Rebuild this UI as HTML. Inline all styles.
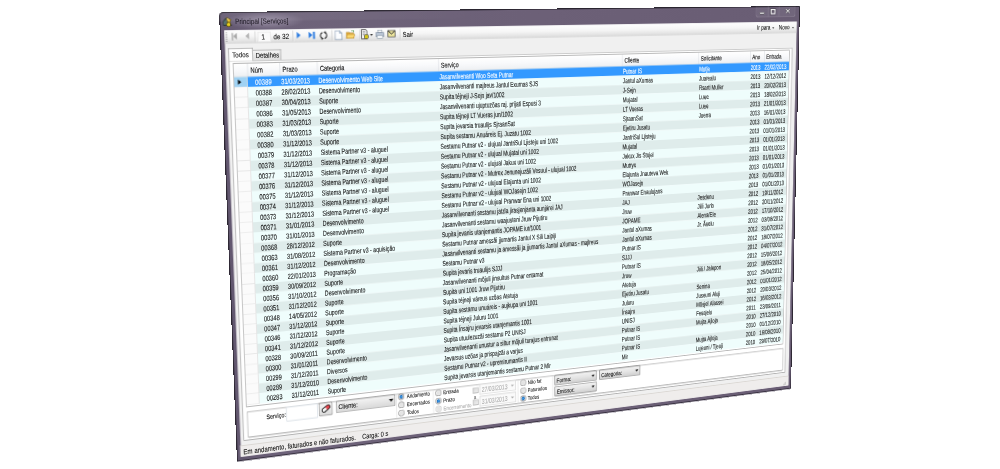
<!DOCTYPE html><html><head><meta charset="utf-8"><style>
html,body{margin:0;padding:0;background:#fff;width:1000px;height:469px;overflow:hidden}
#outer{position:absolute;left:0;top:0;width:651.0px;height:440.2px;transform-origin:0 0;transform:matrix3d(1.11974370,-0.00751206,0,0.0002840882,0.06874739,1.07584913,0,0.0001175396,0,0,1,0,219.0000,12.0000,0,1.000000)}
#win{position:absolute;left:0;top:0;width:1050px;height:710px;transform-origin:0 0;transform:scale(0.62);
background:linear-gradient(90deg,#62576f,#6e637a 8%,#6c6077 50%,#695d74);border-radius:7px 2px 0 0;box-shadow:inset 0 0 0 1.5px #2a2530}
.a{position:absolute}
.t{position:absolute;left:0;top:0;white-space:nowrap;line-height:16px;transform-origin:0 0;font-family:"Liberation Sans",sans-serif}
</style></head><body><div id="wrap" style="position:absolute;left:0;top:0;width:1000px;height:469px;filter:blur(.22px)"><div id="outer"><div id="win">

<div class="a" style="left:0px;top:0px;width:1050px;height:14px;background:linear-gradient(90deg,rgba(255,255,255,.08),rgba(255,255,255,0) 40%);border-radius:7px 0 0 0"></div>
<div class="a" style="left:8px;top:1px;width:125px;height:26px;background:radial-gradient(ellipse closest-side,rgba(235,228,245,.35),rgba(235,228,245,.15) 60%,rgba(235,228,245,0))"></div>
<svg class="a" style="left:5px;top:7px" width="16" height="16" viewBox="0 0 16 16"><path d="M1 7 L5 3 L8 6 L8 13 L1 13Z" fill="#557070" stroke="#1a2a2a" stroke-width=".9"/><path d="M6 1.5 L13 5 L10.5 9.5 L7 8Z" fill="#e8c030" stroke="#5a4a10" stroke-width=".7"/><path d="M6.5 2.5 L9 3.5 L8 6Z" fill="#fff4b0"/><circle cx="9" cy="12" r="3.2" fill="#e8d020" stroke="#4a4000" stroke-width=".8"/><path d="M12 11 L14.5 13 L12 14Z" fill="#222"/></svg>
<div class="a" style="left:957px;top:0px;width:84px;height:18.5px;border:1px solid rgba(255,255,255,.25);border-top:none;border-radius:0 0 5px 5px;box-sizing:border-box;background:rgba(255,255,255,.06)"></div>
<div class="a" style="left:982px;top:0px;width:1px;height:18px;background:rgba(255,255,255,.18)"></div>
<div class="a" style="left:1004.5px;top:0px;width:1px;height:18px;background:rgba(255,255,255,.18)"></div>
<div class="a" style="left:965px;top:9.5px;width:10px;height:4.5px;background:#f0f0f0;border:1px solid #3a3540;box-sizing:border-box"></div>
<div class="a" style="left:988px;top:4.5px;width:9.5px;height:9.5px;border:2px solid #f0f0f0;box-shadow:0 0 0 1px #3a3540,inset 0 0 0 1px #3a3540;box-sizing:border-box"></div>
<svg class="a" style="left:1019px;top:4px" width="11" height="9" viewBox="0 0 11 9"><path d="M1.5 1 L9.5 8 M9.5 1 L1.5 8" stroke="#3a3540" stroke-width="3.4"/><path d="M1.5 1 L9.5 8 M9.5 1 L1.5 8" stroke="#f0f0f0" stroke-width="1.8"/></svg>
<div class="a" style="left:7px;top:27.5px;width:1037px;height:675px;background:#f0f0f0"></div>
<div class="a" style="left:7px;top:27.5px;width:1037px;height:20.5px;background:linear-gradient(#fefefe,#f6f6f6 45%,#e4e4e4 80%,#d6d6d6)"></div>
<div class="a" style="left:9px;top:31px;width:2px;height:14px;background:repeating-linear-gradient(#999 0 1.5px,transparent 1.5px 3px)"></div>
<div class="a" style="left:18px;top:32px;width:2px;height:11px;background:#a8a8a8"></div>
<div class="a" style="left:20px;top:32px;width:0px;height:0px;border:5.5px solid transparent;border-right:6px solid #a8a8a8;border-left:none"></div>
<div class="a" style="left:39px;top:32px;width:0px;height:0px;border:5.5px solid transparent;border-right:6px solid #b4b4b4;border-left:none"></div>
<div class="a" style="left:54px;top:30px;width:1px;height:16px;background:#c4c4c4;box-shadow:1px 0 0 #fff"></div>
<div class="a" style="left:58px;top:31px;width:21px;height:14.5px;background:#fafafa;border:1px solid #e4e4e4;box-sizing:border-box"></div>
<div class="a" style="left:113px;top:30px;width:1px;height:16px;background:#c4c4c4;box-shadow:1px 0 0 #fff"></div>
<div class="a" style="left:120px;top:32px;width:0px;height:0px;border:5.5px solid transparent;border-left:6px solid #2a7ae0;border-right:none"></div>
<div class="a" style="left:139px;top:32px;width:0px;height:0px;border:5.5px solid transparent;border-left:6px solid #2a7ae0;border-right:none"></div>
<div class="a" style="left:146px;top:32px;width:2.5px;height:11px;background:#2a7ae0"></div>
<svg class="a" style="left:156px;top:31px" width="14" height="14" viewBox="0 0 14 14"><path d="M5.5 2.3 A5 5 0 0 0 4.5 11.5" fill="none" stroke="#2a2a2a" stroke-width="1.7"/><path d="M8.5 11.7 A5 5 0 0 0 9.5 2.5" fill="none" stroke="#2a2a2a" stroke-width="1.7"/><path d="M3 9.5 L7 12 L3.5 13.8Z M11 4.5 L7 2 L10.5 0.2Z" fill="#2a2a2a"/></svg>
<div class="a" style="left:176px;top:30px;width:1px;height:16px;background:#c4c4c4;box-shadow:1px 0 0 #fff"></div>
<svg class="a" style="left:181px;top:30px" width="13" height="16" viewBox="0 0 13 16"><path d="M1 1 H8 L12 5 V15 H1Z" fill="#fcfdff" stroke="#7d93ad" stroke-width="1"/><path d="M8 1 V5 H12" fill="#dde6f0" stroke="#7d93ad" stroke-width="1"/></svg>
<svg class="a" style="left:199px;top:30px" width="16" height="15" viewBox="0 0 16 15"><path d="M1 4 H6 L7 5 H13 V13 H1Z" fill="#e6b040" stroke="#a87a20" stroke-width=".8"/><path d="M3 7 H15 L13 13 H1Z" fill="#fbd870" stroke="#b98a2e" stroke-width=".8"/><path d="M9 1 L13 1 L13 4" fill="none" stroke="#3a8a3a" stroke-width="1"/></svg>
<div class="a" style="left:222px;top:30px;width:1px;height:16px;background:#c4c4c4;box-shadow:1px 0 0 #fff"></div>
<svg class="a" style="left:224px;top:29px" width="22" height="17" viewBox="0 0 22 17"><path d="M1 1 H8 L10 3 V15 H1Z" fill="#f2f2f2" stroke="#444" stroke-width="1.2"/><path d="M3 4 H7 M3 6.5 H7 M3 9 H6" stroke="#666" stroke-width="1"/><circle cx="9" cy="12" r="3.5" fill="#d8c818" stroke="#444" stroke-width="1"/><path d="M15 8 L20 8 L17.5 11Z" fill="#222"/></svg>
<svg class="a" style="left:248px;top:30px" width="15" height="15" viewBox="0 0 15 15"><path d="M4 1 H11 V5 H4Z" fill="#fff" stroke="#8090a0" stroke-width=".8"/><path d="M1 5 H14 V11 H1Z" fill="#b8c4d4" stroke="#6a7a90" stroke-width=".8"/><path d="M3 9 H12 V14 H3Z" fill="#f4f6f8" stroke="#8090a0" stroke-width=".8"/></svg>
<svg class="a" style="left:268px;top:31px" width="14" height="12" viewBox="0 0 14 12"><path d="M1 1 H13 V11 H1Z" fill="#f2eaa0" stroke="#333" stroke-width="1.3"/><path d="M1 1 L7 6.5 L13 1" fill="none" stroke="#333" stroke-width="1.3"/></svg>
<div class="a" style="left:289px;top:30px;width:1px;height:16px;background:#c4c4c4;box-shadow:1px 0 0 #fff"></div>
<div class="a" style="left:992px;top:36.5px;width:0px;height:0px;border:2.5px solid transparent;border-top:3px solid #333;border-bottom:none"></div>
<div class="a" style="left:1034px;top:36.5px;width:0px;height:0px;border:2.5px solid transparent;border-top:3px solid #333;border-bottom:none"></div>
<div class="a" style="left:12px;top:73.5px;width:1024px;height:603px;background:#fff;border:1px solid #9a9a9a;box-sizing:border-box"></div>
<div class="a" style="left:12px;top:55px;width:38px;height:19.5px;background:#fff;border:1px solid #9a9a9a;border-bottom:none;box-sizing:border-box"></div>
<div class="a" style="left:50px;top:58px;width:44px;height:15.5px;background:linear-gradient(#f4f4f4,#dedede);border:1px solid #9a9a9a;border-bottom:none;border-left:none;box-sizing:border-box"></div>
<div class="a" style="left:18px;top:77.5px;width:1012px;height:544.5px;background:#fff;border:1px solid #a0a0a0;box-sizing:border-box;overflow:hidden">
<div class="a" style="left:0px;top:0px;width:1012px;height:20px;background:linear-gradient(#fff,#f8f9fb 50%,#eef0f3);border-bottom:1px solid #d8d8d8;box-sizing:border-box"></div>
<div class="a" style="left:21.299999999999997px;top:0px;width:1px;height:20px;background:#dadde2"></div>
<div class="a" style="left:72.0px;top:0px;width:1px;height:20px;background:#dadde2"></div>
<div class="a" style="left:132px;top:0px;width:1px;height:20px;background:#dadde2"></div>
<div class="a" style="left:335px;top:0px;width:1px;height:20px;background:#dadde2"></div>
<div class="a" style="left:671px;top:0px;width:1px;height:20px;background:#dadde2"></div>
<div class="a" style="left:822px;top:0px;width:1px;height:20px;background:#dadde2"></div>
<div class="a" style="left:928px;top:0px;width:1px;height:20px;background:#dadde2"></div>
<div class="a" style="left:957px;top:0px;width:1px;height:20px;background:#dadde2"></div>
<div class="a" style="left:1012px;top:0px;width:1px;height:20px;background:#dadde2"></div>
<div class="a" style="left:21.299999999999997px;top:20.0px;width:990.7px;height:16.25px;background:#3399ff"></div>
<div class="a" style="left:0px;top:20.0px;width:21.299999999999997px;height:16.25px;background:#9fd2f4;border-bottom:1px solid #e2e2e2;border-right:1px solid #d8d8d8;box-sizing:border-box"></div>
<div class="a" style="left:6px;top:24.0px;width:0px;height:0px;border:4px solid transparent;border-left:5px solid #000;border-right:none"></div>
<div class="a" style="left:21.299999999999997px;top:36.25px;width:990.7px;height:16.25px;background:#effdfc"></div>
<div class="a" style="left:0px;top:36.25px;width:21.299999999999997px;height:16.25px;background:#fbfbfb;border-bottom:1px solid #e2e2e2;border-right:1px solid #d8d8d8;box-sizing:border-box"></div>
<div class="a" style="left:21.299999999999997px;top:52.5px;width:990.7px;height:16.25px;background:#dfeceb"></div>
<div class="a" style="left:0px;top:52.5px;width:21.299999999999997px;height:16.25px;background:#fbfbfb;border-bottom:1px solid #e2e2e2;border-right:1px solid #d8d8d8;box-sizing:border-box"></div>
<div class="a" style="left:21.299999999999997px;top:68.75px;width:990.7px;height:16.25px;background:#effdfc"></div>
<div class="a" style="left:0px;top:68.75px;width:21.299999999999997px;height:16.25px;background:#fbfbfb;border-bottom:1px solid #e2e2e2;border-right:1px solid #d8d8d8;box-sizing:border-box"></div>
<div class="a" style="left:21.299999999999997px;top:85.0px;width:990.7px;height:16.25px;background:#dfeceb"></div>
<div class="a" style="left:0px;top:85.0px;width:21.299999999999997px;height:16.25px;background:#fbfbfb;border-bottom:1px solid #e2e2e2;border-right:1px solid #d8d8d8;box-sizing:border-box"></div>
<div class="a" style="left:21.299999999999997px;top:101.25px;width:990.7px;height:16.25px;background:#effdfc"></div>
<div class="a" style="left:0px;top:101.25px;width:21.299999999999997px;height:16.25px;background:#fbfbfb;border-bottom:1px solid #e2e2e2;border-right:1px solid #d8d8d8;box-sizing:border-box"></div>
<div class="a" style="left:21.299999999999997px;top:117.5px;width:990.7px;height:16.25px;background:#dfeceb"></div>
<div class="a" style="left:0px;top:117.5px;width:21.299999999999997px;height:16.25px;background:#fbfbfb;border-bottom:1px solid #e2e2e2;border-right:1px solid #d8d8d8;box-sizing:border-box"></div>
<div class="a" style="left:21.299999999999997px;top:133.75px;width:990.7px;height:16.25px;background:#effdfc"></div>
<div class="a" style="left:0px;top:133.75px;width:21.299999999999997px;height:16.25px;background:#fbfbfb;border-bottom:1px solid #e2e2e2;border-right:1px solid #d8d8d8;box-sizing:border-box"></div>
<div class="a" style="left:21.299999999999997px;top:150.0px;width:990.7px;height:16.25px;background:#dfeceb"></div>
<div class="a" style="left:0px;top:150.0px;width:21.299999999999997px;height:16.25px;background:#fbfbfb;border-bottom:1px solid #e2e2e2;border-right:1px solid #d8d8d8;box-sizing:border-box"></div>
<div class="a" style="left:21.299999999999997px;top:166.25px;width:990.7px;height:16.25px;background:#effdfc"></div>
<div class="a" style="left:0px;top:166.25px;width:21.299999999999997px;height:16.25px;background:#fbfbfb;border-bottom:1px solid #e2e2e2;border-right:1px solid #d8d8d8;box-sizing:border-box"></div>
<div class="a" style="left:21.299999999999997px;top:182.5px;width:990.7px;height:16.25px;background:#dfeceb"></div>
<div class="a" style="left:0px;top:182.5px;width:21.299999999999997px;height:16.25px;background:#fbfbfb;border-bottom:1px solid #e2e2e2;border-right:1px solid #d8d8d8;box-sizing:border-box"></div>
<div class="a" style="left:21.299999999999997px;top:198.75px;width:990.7px;height:16.25px;background:#effdfc"></div>
<div class="a" style="left:0px;top:198.75px;width:21.299999999999997px;height:16.25px;background:#fbfbfb;border-bottom:1px solid #e2e2e2;border-right:1px solid #d8d8d8;box-sizing:border-box"></div>
<div class="a" style="left:21.299999999999997px;top:215.0px;width:990.7px;height:16.25px;background:#dfeceb"></div>
<div class="a" style="left:0px;top:215.0px;width:21.299999999999997px;height:16.25px;background:#fbfbfb;border-bottom:1px solid #e2e2e2;border-right:1px solid #d8d8d8;box-sizing:border-box"></div>
<div class="a" style="left:21.299999999999997px;top:231.25px;width:990.7px;height:16.25px;background:#effdfc"></div>
<div class="a" style="left:0px;top:231.25px;width:21.299999999999997px;height:16.25px;background:#fbfbfb;border-bottom:1px solid #e2e2e2;border-right:1px solid #d8d8d8;box-sizing:border-box"></div>
<div class="a" style="left:21.299999999999997px;top:247.5px;width:990.7px;height:16.25px;background:#dfeceb"></div>
<div class="a" style="left:0px;top:247.5px;width:21.299999999999997px;height:16.25px;background:#fbfbfb;border-bottom:1px solid #e2e2e2;border-right:1px solid #d8d8d8;box-sizing:border-box"></div>
<div class="a" style="left:21.299999999999997px;top:263.75px;width:990.7px;height:16.25px;background:#effdfc"></div>
<div class="a" style="left:0px;top:263.75px;width:21.299999999999997px;height:16.25px;background:#fbfbfb;border-bottom:1px solid #e2e2e2;border-right:1px solid #d8d8d8;box-sizing:border-box"></div>
<div class="a" style="left:21.299999999999997px;top:280.0px;width:990.7px;height:16.25px;background:#dfeceb"></div>
<div class="a" style="left:0px;top:280.0px;width:21.299999999999997px;height:16.25px;background:#fbfbfb;border-bottom:1px solid #e2e2e2;border-right:1px solid #d8d8d8;box-sizing:border-box"></div>
<div class="a" style="left:21.299999999999997px;top:296.25px;width:990.7px;height:16.25px;background:#effdfc"></div>
<div class="a" style="left:0px;top:296.25px;width:21.299999999999997px;height:16.25px;background:#fbfbfb;border-bottom:1px solid #e2e2e2;border-right:1px solid #d8d8d8;box-sizing:border-box"></div>
<div class="a" style="left:21.299999999999997px;top:312.5px;width:990.7px;height:16.25px;background:#dfeceb"></div>
<div class="a" style="left:0px;top:312.5px;width:21.299999999999997px;height:16.25px;background:#fbfbfb;border-bottom:1px solid #e2e2e2;border-right:1px solid #d8d8d8;box-sizing:border-box"></div>
<div class="a" style="left:21.299999999999997px;top:328.75px;width:990.7px;height:16.25px;background:#effdfc"></div>
<div class="a" style="left:0px;top:328.75px;width:21.299999999999997px;height:16.25px;background:#fbfbfb;border-bottom:1px solid #e2e2e2;border-right:1px solid #d8d8d8;box-sizing:border-box"></div>
<div class="a" style="left:21.299999999999997px;top:345.0px;width:990.7px;height:16.25px;background:#dfeceb"></div>
<div class="a" style="left:0px;top:345.0px;width:21.299999999999997px;height:16.25px;background:#fbfbfb;border-bottom:1px solid #e2e2e2;border-right:1px solid #d8d8d8;box-sizing:border-box"></div>
<div class="a" style="left:21.299999999999997px;top:361.25px;width:990.7px;height:16.25px;background:#effdfc"></div>
<div class="a" style="left:0px;top:361.25px;width:21.299999999999997px;height:16.25px;background:#fbfbfb;border-bottom:1px solid #e2e2e2;border-right:1px solid #d8d8d8;box-sizing:border-box"></div>
<div class="a" style="left:21.299999999999997px;top:377.5px;width:990.7px;height:16.25px;background:#dfeceb"></div>
<div class="a" style="left:0px;top:377.5px;width:21.299999999999997px;height:16.25px;background:#fbfbfb;border-bottom:1px solid #e2e2e2;border-right:1px solid #d8d8d8;box-sizing:border-box"></div>
<div class="a" style="left:21.299999999999997px;top:393.75px;width:990.7px;height:16.25px;background:#effdfc"></div>
<div class="a" style="left:0px;top:393.75px;width:21.299999999999997px;height:16.25px;background:#fbfbfb;border-bottom:1px solid #e2e2e2;border-right:1px solid #d8d8d8;box-sizing:border-box"></div>
<div class="a" style="left:21.299999999999997px;top:410.0px;width:990.7px;height:16.25px;background:#dfeceb"></div>
<div class="a" style="left:0px;top:410.0px;width:21.299999999999997px;height:16.25px;background:#fbfbfb;border-bottom:1px solid #e2e2e2;border-right:1px solid #d8d8d8;box-sizing:border-box"></div>
<div class="a" style="left:21.299999999999997px;top:426.25px;width:990.7px;height:16.25px;background:#effdfc"></div>
<div class="a" style="left:0px;top:426.25px;width:21.299999999999997px;height:16.25px;background:#fbfbfb;border-bottom:1px solid #e2e2e2;border-right:1px solid #d8d8d8;box-sizing:border-box"></div>
<div class="a" style="left:21.299999999999997px;top:442.5px;width:990.7px;height:16.25px;background:#dfeceb"></div>
<div class="a" style="left:0px;top:442.5px;width:21.299999999999997px;height:16.25px;background:#fbfbfb;border-bottom:1px solid #e2e2e2;border-right:1px solid #d8d8d8;box-sizing:border-box"></div>
<div class="a" style="left:21.299999999999997px;top:458.75px;width:990.7px;height:16.25px;background:#effdfc"></div>
<div class="a" style="left:0px;top:458.75px;width:21.299999999999997px;height:16.25px;background:#fbfbfb;border-bottom:1px solid #e2e2e2;border-right:1px solid #d8d8d8;box-sizing:border-box"></div>
<div class="a" style="left:21.299999999999997px;top:475.0px;width:990.7px;height:16.25px;background:#dfeceb"></div>
<div class="a" style="left:0px;top:475.0px;width:21.299999999999997px;height:16.25px;background:#fbfbfb;border-bottom:1px solid #e2e2e2;border-right:1px solid #d8d8d8;box-sizing:border-box"></div>
<div class="a" style="left:21.299999999999997px;top:491.25px;width:990.7px;height:16.25px;background:#effdfc"></div>
<div class="a" style="left:0px;top:491.25px;width:21.299999999999997px;height:16.25px;background:#fbfbfb;border-bottom:1px solid #e2e2e2;border-right:1px solid #d8d8d8;box-sizing:border-box"></div>
<div class="a" style="left:21.299999999999997px;top:507.5px;width:990.7px;height:16.25px;background:#dfeceb"></div>
<div class="a" style="left:0px;top:507.5px;width:21.299999999999997px;height:16.25px;background:#fbfbfb;border-bottom:1px solid #e2e2e2;border-right:1px solid #d8d8d8;box-sizing:border-box"></div>
<div class="a" style="left:21.299999999999997px;top:523.75px;width:990.7px;height:16.25px;background:#effdfc"></div>
<div class="a" style="left:0px;top:523.75px;width:21.299999999999997px;height:16.25px;background:#fbfbfb;border-bottom:1px solid #e2e2e2;border-right:1px solid #d8d8d8;box-sizing:border-box"></div>
</div>
<div class="a" style="left:19px;top:629.5px;width:1012px;height:42px;background:#fff;border:1px solid #a8a8a8;box-shadow:0 1px 0 #fff,0 4px 0 -2px #d8d8d8;box-sizing:border-box"></div>
<div class="a" style="left:83px;top:630px;width:52px;height:24px;background:#fff;border:1px solid #d0d8e0;box-sizing:border-box"></div>
<div class="a" style="left:137px;top:630px;width:23px;height:22px;background:linear-gradient(#f6f6f6,#dadada);border:1px solid #8a8a8a;border-radius:2px;box-sizing:border-box"></div>
<svg class="a" style="left:140px;top:632px" width="18" height="16" viewBox="0 0 18 16"><g transform="rotate(-35 9 8)"><rect x="1.5" y="5" width="15" height="6.5" rx="3.2" fill="#f8f8f8" stroke="#222" stroke-width="1.2"/><path d="M9.5 5 H13.3 A3.2 3.2 0 0 1 13.3 11.5 H9.5Z" fill="#e84850"/><rect x="1.5" y="5" width="15" height="6.5" rx="3.2" fill="none" stroke="#222" stroke-width="1.2"/></g></svg>
<div class="a" style="left:166px;top:629.5px;width:102px;height:20px;background:linear-gradient(#f4f4f4,#d8d8d8);border:1px solid #8a8a8a;border-radius:2px;box-sizing:border-box"></div>
<div class="a" style="left:257px;top:637px;width:0px;height:0px;border:4px solid transparent;border-top:5px solid #111;border-bottom:none"></div>
<div class="a" style="left:270px;top:629.5px;width:1px;height:42px;background:#dcdcdc"></div>
<div class="a" style="left:272.5px;top:629.5px;width:11px;height:11px;border-radius:50%;border:1px solid #8a8a8a;background:radial-gradient(circle,#3a9ae8 0 20%,#1660b0 42%,#cfd4da 50%,#f2f2f2);box-sizing:border-box"></div>
<div class="a" style="left:272.5px;top:643.5px;width:11px;height:11px;border-radius:50%;border:1px solid #8a8a8a;background:radial-gradient(circle,#e4e4e4 0 40%,#f4f4f4 80%);box-sizing:border-box"></div>
<div class="a" style="left:272.5px;top:657.5px;width:11px;height:11px;border-radius:50%;border:1px solid #8a8a8a;background:radial-gradient(circle,#e4e4e4 0 40%,#f4f4f4 80%);box-sizing:border-box"></div>
<div class="a" style="left:335px;top:629.5px;width:1px;height:42px;background:#dcdcdc"></div>
<div class="a" style="left:338.5px;top:630.5px;width:11px;height:11px;border-radius:50%;border:1px solid #8a8a8a;background:radial-gradient(circle,#e4e4e4 0 40%,#f4f4f4 80%);box-sizing:border-box"></div>
<div class="a" style="left:338.5px;top:644.5px;width:11px;height:11px;border-radius:50%;border:1px solid #8a8a8a;background:radial-gradient(circle,#3a9ae8 0 20%,#1660b0 42%,#cfd4da 50%,#f2f2f2);box-sizing:border-box"></div>
<div class="a" style="left:338.5px;top:658.5px;width:11px;height:11px;border-radius:50%;border:1px solid #c8c8c8;background:radial-gradient(circle,#e4e4e4 0 40%,#f4f4f4 80%);box-sizing:border-box"></div>
<div class="a" style="left:407px;top:635px;width:10px;height:10px;border:1px solid #a8a8a8;background:linear-gradient(135deg,#d8d8d8,#f0f0f0);box-sizing:border-box"></div>
<div class="a" style="left:419px;top:630px;width:68px;height:18px;border:1px solid #cfcfcf;background:#fafafa;box-sizing:border-box"></div>
<div class="a" style="left:477px;top:638px;width:0px;height:0px;border:3px solid transparent;border-top:3.5px solid #aaa;border-bottom:none"></div>
<div class="a" style="left:407px;top:656px;width:10px;height:10px;border:1px solid #a8a8a8;background:linear-gradient(135deg,#d8d8d8,#f0f0f0);box-sizing:border-box"></div>
<div class="a" style="left:419px;top:651px;width:68px;height:18px;border:1px solid #cfcfcf;background:#fafafa;box-sizing:border-box"></div>
<div class="a" style="left:477px;top:659px;width:0px;height:0px;border:3px solid transparent;border-top:3.5px solid #aaa;border-bottom:none"></div>
<div class="a" style="left:490px;top:629.5px;width:1px;height:42px;background:#dcdcdc"></div>
<div class="a" style="left:494.5px;top:630.5px;width:11px;height:11px;border-radius:50%;border:1px solid #8a8a8a;background:radial-gradient(circle,#e4e4e4 0 40%,#f4f4f4 80%);box-sizing:border-box"></div>
<div class="a" style="left:494.5px;top:644.5px;width:11px;height:11px;border-radius:50%;border:1px solid #8a8a8a;background:radial-gradient(circle,#e4e4e4 0 40%,#f4f4f4 80%);box-sizing:border-box"></div>
<div class="a" style="left:494.5px;top:658.5px;width:11px;height:11px;border-radius:50%;border:1px solid #8a8a8a;background:radial-gradient(circle,#3a9ae8 0 20%,#1660b0 42%,#cfd4da 50%,#f2f2f2);box-sizing:border-box"></div>
<div class="a" style="left:556px;top:629.5px;width:1px;height:42px;background:#dcdcdc"></div>
<div class="a" style="left:560px;top:629.5px;width:82px;height:18px;background:linear-gradient(#f2f2f2,#e4e4e4 50%,#cfcfcf);border:1px solid #707070;border-radius:2px;box-sizing:border-box"></div>
<div class="a" style="left:632px;top:637px;width:0px;height:0px;border:3.5px solid transparent;border-top:4.5px solid #111;border-bottom:none"></div>
<div class="a" style="left:560px;top:649.5px;width:82px;height:18px;background:linear-gradient(#f2f2f2,#e4e4e4 50%,#cfcfcf);border:1px solid #707070;border-radius:2px;box-sizing:border-box"></div>
<div class="a" style="left:632px;top:657px;width:0px;height:0px;border:3.5px solid transparent;border-top:4.5px solid #111;border-bottom:none"></div>
<div class="a" style="left:647px;top:629.5px;width:82px;height:18px;background:linear-gradient(#f2f2f2,#e4e4e4 50%,#cfcfcf);border:1px solid #707070;border-radius:2px;box-sizing:border-box"></div>
<div class="a" style="left:719px;top:637px;width:0px;height:0px;border:3.5px solid transparent;border-top:4.5px solid #111;border-bottom:none"></div>
<div class="a" style="left:6px;top:683.5px;width:1038px;height:19px;background:#efedec;border-top:1px solid #d4d0cc;box-sizing:border-box"></div>
<div class="a" style="left:1036px;top:696px;width:1.5px;height:1.5px;background:#999"></div>
<div class="a" style="left:1036px;top:699px;width:1.5px;height:1.5px;background:#999"></div>
<div class="a" style="left:1033px;top:699px;width:1.5px;height:1.5px;background:#999"></div>
</div></div>
<div class="t" style="font-size:11.5px;color:#1c1822;transform:matrix(0.54834,-0.00708,0.02440,0.65979,234.88,16.17);-webkit-text-stroke:0.05px #1c1822">Principal</div>
<div class="t" style="font-size:11.5px;color:#1c1822;transform:matrix(0.54022,-0.00698,0.02225,0.65490,260.84,15.87);-webkit-text-stroke:0.05px #1c1822">[Serviços]</div>
<div class="t" style="font-size:11.5px;color:#111;transform:matrix(0.54276,-0.00934,0.02311,0.65479,261.21,31.63);-webkit-text-stroke:0.15px #111">1</div>
<div class="t" style="font-size:11.5px;color:#111;transform:matrix(0.53869,-0.00927,0.02204,0.65234,273.32,31.44);-webkit-text-stroke:0.15px #111">de</div>
<div class="t" style="font-size:11.5px;color:#111;transform:matrix(0.53617,-0.00922,0.02137,0.65083,281.94,31.30);-webkit-text-stroke:0.15px #111">32</div>
<div class="t" style="font-size:11.5px;color:#111;transform:matrix(0.50088,-0.00862,0.01221,0.62919,402.67,29.40);-webkit-text-stroke:0.15px #111">Sair</div>
<div class="t" style="font-size:11.5px;color:#111;transform:matrix(0.40648,-0.00688,-0.01079,0.56726,757.09,22.95);-webkit-text-stroke:0.15px #111">Ir</div>
<div class="t" style="font-size:11.5px;color:#111;transform:matrix(0.40459,-0.00685,-0.01122,0.56595,761.26,22.89);-webkit-text-stroke:0.15px #111">para</div>
<div class="t" style="font-size:11.5px;color:#111;transform:matrix(0.39991,-0.00679,-0.01229,0.56267,778.98,22.73);-webkit-text-stroke:0.15px #111">Novo</div>
<div class="t" style="font-size:11px;color:#111;transform:matrix(0.56788,-0.01244,0.02485,0.65639,231.93,49.59);-webkit-text-stroke:0.12px #111">Todos</div>
<div class="t" style="font-size:11px;color:#111;transform:matrix(0.54050,-0.01199,0.02273,0.65152,255.51,50.10);-webkit-text-stroke:0.15px #111">Detalhes</div>
<div class="t" style="font-size:11.5px;color:#111;transform:matrix(0.51098,-0.01337,0.02355,0.65142,250.12,64.94);-webkit-text-stroke:0.2px #111">Núm</div>
<div class="t" style="font-size:11.5px;color:#111;transform:matrix(0.50172,-0.01313,0.02095,0.64555,282.36,64.14);-webkit-text-stroke:0.2px #111">Prazo</div>
<div class="t" style="font-size:11.5px;color:#111;transform:matrix(0.49022,-0.01283,0.01775,0.63819,319.81,63.22);-webkit-text-stroke:0.2px #111">Categoria</div>
<div class="t" style="font-size:11.5px;color:#111;transform:matrix(0.45879,-0.01201,0.00918,0.61760,440.92,60.22);-webkit-text-stroke:0.2px #111">Serviço</div>
<div class="t" style="font-size:11.5px;color:#111;transform:matrix(0.41218,-0.01079,-0.00303,0.58570,624.54,55.67);-webkit-text-stroke:0.2px #111">Cliente</div>
<div class="t" style="font-size:11.5px;color:#111;transform:matrix(0.39264,-0.01027,-0.00795,0.57178,700.95,53.78);-webkit-text-stroke:0.2px #111">Solicitante</div>
<div class="t" style="font-size:11.5px;color:#111;transform:matrix(0.38178,-0.00999,-0.01063,0.56389,752.48,52.50);-webkit-text-stroke:0.2px #111">Ano</div>
<div class="t" style="font-size:11.5px;color:#111;transform:matrix(0.37759,-0.00988,-0.01165,0.56081,766.32,52.16);-webkit-text-stroke:0.2px #111">Entrada</div>
<div class="t" style="font-size:12px;color:#fff;transform:matrix(0.48938,-0.01444,0.02298,0.64853,255.06,77.16);-webkit-text-stroke:0.18px #fff">00389</div>
<div class="t" style="font-size:12px;color:#fff;transform:matrix(0.48087,-0.01419,0.02051,0.64294,280.92,76.44);-webkit-text-stroke:0.18px #fff">31/03/2013</div>
<div class="t" style="font-size:12px;color:#fff;transform:matrix(0.45110,-0.01331,0.01720,0.63531,318.40,75.40);-webkit-text-stroke:0.18px #fff">Desenvolvimento</div>
<div class="t" style="font-size:12px;color:#fff;transform:matrix(0.44423,-0.01311,0.01515,0.63050,361.32,74.17);-webkit-text-stroke:0.18px #fff">Web</div>
<div class="t" style="font-size:12px;color:#fff;transform:matrix(0.44138,-0.01303,0.01431,0.62850,373.66,73.82);-webkit-text-stroke:0.18px #fff">Site</div>
<div class="t" style="font-size:12px;color:#fff;transform:matrix(0.42215,-0.01246,0.00867,0.61482,439.45,71.99);-webkit-text-stroke:0.18px #fff">Jasanvilvenanti</div>
<div class="t" style="font-size:12px;color:#fff;transform:matrix(0.41642,-0.01229,0.00702,0.61068,475.42,70.96);-webkit-text-stroke:0.18px #fff">Woo</div>
<div class="t" style="font-size:12px;color:#fff;transform:matrix(0.41364,-0.01221,0.00622,0.60866,486.99,70.64);-webkit-text-stroke:0.18px #fff">Seta</div>
<div class="t" style="font-size:12px;color:#fff;transform:matrix(0.41035,-0.01211,0.00528,0.60626,498.59,70.31);-webkit-text-stroke:0.18px #fff">Putnar</div>
<div class="t" style="font-size:12px;color:#fff;transform:matrix(0.38131,-0.01125,-0.00288,0.58465,622.94,66.82);-webkit-text-stroke:0.18px #fff">Putnar</div>
<div class="t" style="font-size:12px;color:#fff;transform:matrix(0.37898,-0.01118,-0.00352,0.58288,637.68,66.40);-webkit-text-stroke:0.18px #fff">IS</div>
<div class="t" style="font-size:12px;color:#fff;transform:matrix(0.36426,-0.01075,-0.00753,0.57157,699.31,64.67);-webkit-text-stroke:0.18px #fff">Mutje</div>
<div class="t" style="font-size:12px;color:#fff;transform:matrix(0.36716,-0.01084,-0.01058,0.56264,750.85,63.22);-webkit-text-stroke:0.18px #fff">2013</div>
<div class="t" style="font-size:12px;color:#fff;transform:matrix(0.36260,-0.01070,-0.01173,0.55917,764.70,62.84);-webkit-text-stroke:0.18px #fff">22/02/2013</div>
<div class="t" style="font-size:12px;color:#1a1a1a;transform:matrix(0.48876,-0.01582,0.02293,0.64703,255.45,87.72);-webkit-text-stroke:0.18px #1a1a1a">00388</div>
<div class="t" style="font-size:12px;color:#1a1a1a;transform:matrix(0.48027,-0.01555,0.02046,0.64146,281.27,86.93);-webkit-text-stroke:0.18px #1a1a1a">28/02/2013</div>
<div class="t" style="font-size:12px;color:#1a1a1a;transform:matrix(0.45056,-0.01459,0.01716,0.63387,318.70,85.78);-webkit-text-stroke:0.18px #1a1a1a">Desenvolvimento</div>
<div class="t" style="font-size:12px;color:#1a1a1a;transform:matrix(0.42167,-0.01365,0.00865,0.61346,439.61,82.03);-webkit-text-stroke:0.18px #1a1a1a">Jasanvilvenanti</div>
<div class="t" style="font-size:12px;color:#1a1a1a;transform:matrix(0.41491,-0.01343,0.00670,0.60859,475.56,80.91);-webkit-text-stroke:0.18px #1a1a1a">majlreus</div>
<div class="t" style="font-size:12px;color:#1a1a1a;transform:matrix(0.41075,-0.01330,0.00551,0.60557,495.75,80.28);-webkit-text-stroke:0.18px #1a1a1a">Jantul</div>
<div class="t" style="font-size:12px;color:#1a1a1a;transform:matrix(0.40676,-0.01317,0.00437,0.60266,510.28,79.83);-webkit-text-stroke:0.18px #1a1a1a">Exumas</div>
<div class="t" style="font-size:12px;color:#1a1a1a;transform:matrix(0.40330,-0.01306,0.00339,0.60012,529.26,79.24);-webkit-text-stroke:0.18px #1a1a1a">SJS</div>
<div class="t" style="font-size:12px;color:#1a1a1a;transform:matrix(0.38107,-0.01234,-0.00284,0.58354,622.90,76.34);-webkit-text-stroke:0.18px #1a1a1a">Jantul</div>
<div class="t" style="font-size:12px;color:#1a1a1a;transform:matrix(0.37747,-0.01222,-0.00383,0.58081,636.38,75.92);-webkit-text-stroke:0.18px #1a1a1a">aXumas</div>
<div class="t" style="font-size:12px;color:#1a1a1a;transform:matrix(0.36322,-0.01176,-0.00770,0.56987,699.20,73.98);-webkit-text-stroke:0.18px #1a1a1a">Juarealu</div>
<div class="t" style="font-size:12px;color:#1a1a1a;transform:matrix(0.36681,-0.01188,-0.01055,0.56151,750.68,72.38);-webkit-text-stroke:0.18px #1a1a1a">2013</div>
<div class="t" style="font-size:12px;color:#1a1a1a;transform:matrix(0.36226,-0.01173,-0.01171,0.55806,764.52,71.96);-webkit-text-stroke:0.18px #1a1a1a">12/12/2012</div>
<div class="t" style="font-size:12px;color:#1a1a1a;transform:matrix(0.48814,-0.01720,0.02288,0.64553,255.83,98.26);-webkit-text-stroke:0.18px #1a1a1a">00387</div>
<div class="t" style="font-size:12px;color:#1a1a1a;transform:matrix(0.47968,-0.01690,0.02041,0.63999,281.62,97.40);-webkit-text-stroke:0.18px #1a1a1a">30/04/2013</div>
<div class="t" style="font-size:12px;color:#1a1a1a;transform:matrix(0.45284,-0.01596,0.01796,0.63438,318.91,96.13);-webkit-text-stroke:0.18px #1a1a1a">Suporte</div>
<div class="t" style="font-size:12px;color:#1a1a1a;transform:matrix(0.42364,-0.01493,0.00935,0.61388,439.69,92.04);-webkit-text-stroke:0.18px #1a1a1a">Supita</div>
<div class="t" style="font-size:12px;color:#1a1a1a;transform:matrix(0.41996,-0.01480,0.00828,0.61124,455.52,91.50);-webkit-text-stroke:0.18px #1a1a1a">téjneji</div>
<div class="t" style="font-size:12px;color:#1a1a1a;transform:matrix(0.41634,-0.01467,0.00723,0.60863,470.10,91.01);-webkit-text-stroke:0.18px #1a1a1a">J-Sejn</div>
<div class="t" style="font-size:12px;color:#1a1a1a;transform:matrix(0.41206,-0.01452,0.00601,0.60554,485.66,90.49);-webkit-text-stroke:0.18px #1a1a1a">jav/1002</div>
<div class="t" style="font-size:12px;color:#1a1a1a;transform:matrix(0.38059,-0.01341,-0.00285,0.58226,622.86,85.84);-webkit-text-stroke:0.18px #1a1a1a">J-Sejn</div>
<div class="t" style="font-size:12px;color:#1a1a1a;transform:matrix(0.36346,-0.01281,-0.00752,0.56917,699.07,83.26);-webkit-text-stroke:0.18px #1a1a1a">Rsarti</div>
<div class="t" style="font-size:12px;color:#1a1a1a;transform:matrix(0.36059,-0.01271,-0.00829,0.56695,711.68,82.83);-webkit-text-stroke:0.18px #1a1a1a">Muller</div>
<div class="t" style="font-size:12px;color:#1a1a1a;transform:matrix(0.36646,-0.01291,-0.01053,0.56038,750.52,81.52);-webkit-text-stroke:0.18px #1a1a1a">2013</div>
<div class="t" style="font-size:12px;color:#1a1a1a;transform:matrix(0.36192,-0.01275,-0.01168,0.55694,764.34,81.06);-webkit-text-stroke:0.18px #1a1a1a">20/02/2013</div>
<div class="t" style="font-size:12px;color:#1a1a1a;transform:matrix(0.48753,-0.01857,0.02282,0.64404,256.21,108.77);-webkit-text-stroke:0.18px #1a1a1a">00386</div>
<div class="t" style="font-size:12px;color:#1a1a1a;transform:matrix(0.47908,-0.01825,0.02037,0.63852,281.97,107.84);-webkit-text-stroke:0.18px #1a1a1a">31/05/2013</div>
<div class="t" style="font-size:12px;color:#1a1a1a;transform:matrix(0.44946,-0.01712,0.01708,0.63100,319.31,106.47);-webkit-text-stroke:0.18px #1a1a1a">Desenvolvimento</div>
<div class="t" style="font-size:12px;color:#1a1a1a;transform:matrix(0.42071,-0.01602,0.00862,0.61078,439.93,102.04);-webkit-text-stroke:0.18px #1a1a1a">Jasanvilvenanti</div>
<div class="t" style="font-size:12px;color:#1a1a1a;transform:matrix(0.41335,-0.01574,0.00649,0.60549,475.81,100.72);-webkit-text-stroke:0.18px #1a1a1a">ujuptuzõas</div>
<div class="t" style="font-size:12px;color:#1a1a1a;transform:matrix(0.40935,-0.01559,0.00535,0.60260,501.15,99.78);-webkit-text-stroke:0.18px #1a1a1a">raj.</div>
<div class="t" style="font-size:12px;color:#1a1a1a;transform:matrix(0.40683,-0.01550,0.00463,0.60076,509.35,99.48);-webkit-text-stroke:0.18px #1a1a1a">prijati</div>
<div class="t" style="font-size:12px;color:#1a1a1a;transform:matrix(0.40340,-0.01537,0.00365,0.59826,522.38,99.01);-webkit-text-stroke:0.18px #1a1a1a">Espusi</div>
<div class="t" style="font-size:12px;color:#1a1a1a;transform:matrix(0.40106,-0.01528,0.00299,0.59655,538.24,98.42);-webkit-text-stroke:0.18px #1a1a1a">3</div>
<div class="t" style="font-size:12px;color:#1a1a1a;transform:matrix(0.37999,-0.01447,-0.00290,0.58089,622.82,95.32);-webkit-text-stroke:0.18px #1a1a1a">Mujatal</div>
<div class="t" style="font-size:12px;color:#1a1a1a;transform:matrix(0.36329,-0.01384,-0.00746,0.56816,698.95,92.52);-webkit-text-stroke:0.18px #1a1a1a">Luee</div>
<div class="t" style="font-size:12px;color:#1a1a1a;transform:matrix(0.36611,-0.01395,-0.01051,0.55926,750.35,90.64);-webkit-text-stroke:0.18px #1a1a1a">2013</div>
<div class="t" style="font-size:12px;color:#1a1a1a;transform:matrix(0.36158,-0.01377,-0.01166,0.55583,764.16,90.14);-webkit-text-stroke:0.18px #1a1a1a">18/02/2013</div>
<div class="t" style="font-size:12px;color:#1a1a1a;transform:matrix(0.48692,-0.01993,0.02277,0.64255,256.59,119.26);-webkit-text-stroke:0.18px #1a1a1a">00383</div>
<div class="t" style="font-size:12px;color:#1a1a1a;transform:matrix(0.47849,-0.01959,0.02032,0.63706,282.32,118.25);-webkit-text-stroke:0.18px #1a1a1a">31/03/2013</div>
<div class="t" style="font-size:12px;color:#1a1a1a;transform:matrix(0.45173,-0.01849,0.01788,0.63150,319.51,116.77);-webkit-text-stroke:0.18px #1a1a1a">Suporte</div>
<div class="t" style="font-size:12px;color:#1a1a1a;transform:matrix(0.42267,-0.01730,0.00931,0.61118,440.01,112.01);-webkit-text-stroke:0.18px #1a1a1a">Supita</div>
<div class="t" style="font-size:12px;color:#1a1a1a;transform:matrix(0.41901,-0.01715,0.00825,0.60857,455.81,111.38);-webkit-text-stroke:0.18px #1a1a1a">téjneji</div>
<div class="t" style="font-size:12px;color:#1a1a1a;transform:matrix(0.41644,-0.01705,0.00750,0.60673,470.33,110.80);-webkit-text-stroke:0.18px #1a1a1a">LT</div>
<div class="t" style="font-size:12px;color:#1a1a1a;transform:matrix(0.41361,-0.01693,0.00669,0.60470,477.11,110.54);-webkit-text-stroke:0.18px #1a1a1a">Vueras</div>
<div class="t" style="font-size:12px;color:#1a1a1a;transform:matrix(0.40918,-0.01675,0.00542,0.60150,494.05,109.87);-webkit-text-stroke:0.18px #1a1a1a">jun/1002</div>
<div class="t" style="font-size:12px;color:#1a1a1a;transform:matrix(0.38072,-0.01559,-0.00259,0.58052,622.77,104.77);-webkit-text-stroke:0.18px #1a1a1a">LT</div>
<div class="t" style="font-size:12px;color:#1a1a1a;transform:matrix(0.37824,-0.01548,-0.00327,0.57866,628.96,104.54);-webkit-text-stroke:0.18px #1a1a1a">Vueras</div>
<div class="t" style="font-size:12px;color:#1a1a1a;transform:matrix(0.36293,-0.01486,-0.00744,0.56700,698.84,101.77);-webkit-text-stroke:0.18px #1a1a1a">Luee</div>
<div class="t" style="font-size:12px;color:#1a1a1a;transform:matrix(0.36576,-0.01497,-0.01049,0.55814,750.18,99.74);-webkit-text-stroke:0.18px #1a1a1a">2013</div>
<div class="t" style="font-size:12px;color:#1a1a1a;transform:matrix(0.36124,-0.01479,-0.01164,0.55473,763.98,99.20);-webkit-text-stroke:0.18px #1a1a1a">21/01/2013</div>
<div class="t" style="font-size:12px;color:#1a1a1a;transform:matrix(0.48630,-0.02129,0.02272,0.64106,256.97,129.72);-webkit-text-stroke:0.18px #1a1a1a">00382</div>
<div class="t" style="font-size:12px;color:#1a1a1a;transform:matrix(0.47790,-0.02092,0.02027,0.63560,282.67,128.64);-webkit-text-stroke:0.18px #1a1a1a">31/03/2013</div>
<div class="t" style="font-size:12px;color:#1a1a1a;transform:matrix(0.45118,-0.01975,0.01784,0.63007,319.81,127.06);-webkit-text-stroke:0.18px #1a1a1a">Suporte</div>
<div class="t" style="font-size:12px;color:#1a1a1a;transform:matrix(0.42219,-0.01848,0.00929,0.60984,440.17,121.96);-webkit-text-stroke:0.18px #1a1a1a">Supita</div>
<div class="t" style="font-size:12px;color:#1a1a1a;transform:matrix(0.41804,-0.01830,0.00808,0.60688,455.96,121.29);-webkit-text-stroke:0.18px #1a1a1a">jevarsia</div>
<div class="t" style="font-size:12px;color:#1a1a1a;transform:matrix(0.41358,-0.01811,0.00680,0.60369,474.64,120.50);-webkit-text-stroke:0.18px #1a1a1a">truaulijs</div>
<div class="t" style="font-size:12px;color:#1a1a1a;transform:matrix(0.40864,-0.01789,0.00538,0.60014,493.14,119.72);-webkit-text-stroke:0.18px #1a1a1a">SjraanSat</div>
<div class="t" style="font-size:12px;color:#1a1a1a;transform:matrix(0.37860,-0.01657,-0.00306,0.57802,622.76,114.22);-webkit-text-stroke:0.18px #1a1a1a">SjraanSat</div>
<div class="t" style="font-size:12px;color:#1a1a1a;transform:matrix(0.36228,-0.01586,-0.00751,0.56562,698.73,111.00);-webkit-text-stroke:0.18px #1a1a1a">Juerra</div>
<div class="t" style="font-size:12px;color:#1a1a1a;transform:matrix(0.36542,-0.01600,-0.01047,0.55702,750.02,108.82);-webkit-text-stroke:0.18px #1a1a1a">2013</div>
<div class="t" style="font-size:12px;color:#1a1a1a;transform:matrix(0.36090,-0.01580,-0.01161,0.55362,763.80,108.25);-webkit-text-stroke:0.18px #1a1a1a">16/01/2013</div>
<div class="t" style="font-size:12px;color:#1a1a1a;transform:matrix(0.48569,-0.02264,0.02267,0.63959,257.35,140.16);-webkit-text-stroke:0.18px #1a1a1a">00380</div>
<div class="t" style="font-size:12px;color:#1a1a1a;transform:matrix(0.47731,-0.02225,0.02023,0.63414,283.02,139.01);-webkit-text-stroke:0.18px #1a1a1a">31/12/2013</div>
<div class="t" style="font-size:12px;color:#1a1a1a;transform:matrix(0.45064,-0.02101,0.01780,0.62864,320.12,137.33);-webkit-text-stroke:0.18px #1a1a1a">Suporte</div>
<div class="t" style="font-size:12px;color:#1a1a1a;transform:matrix(0.42171,-0.01966,0.00927,0.60850,440.33,131.89);-webkit-text-stroke:0.18px #1a1a1a">Supita</div>
<div class="t" style="font-size:12px;color:#1a1a1a;transform:matrix(0.41736,-0.01945,0.00801,0.60541,456.10,131.18);-webkit-text-stroke:0.18px #1a1a1a">sestamu</div>
<div class="t" style="font-size:12px;color:#1a1a1a;transform:matrix(0.41243,-0.01922,0.00658,0.60189,476.43,130.26);-webkit-text-stroke:0.18px #1a1a1a">Anuáreis</div>
<div class="t" style="font-size:12px;color:#1a1a1a;transform:matrix(0.40910,-0.01907,0.00563,0.59950,497.31,129.31);-webkit-text-stroke:0.18px #1a1a1a">Ej.</div>
<div class="t" style="font-size:12px;color:#1a1a1a;transform:matrix(0.40639,-0.01894,0.00485,0.59754,504.42,128.99);-webkit-text-stroke:0.18px #1a1a1a">Juzatu</div>
<div class="t" style="font-size:12px;color:#1a1a1a;transform:matrix(0.40310,-0.01879,0.00391,0.59516,520.14,128.28);-webkit-text-stroke:0.18px #1a1a1a">1002</div>
<div class="t" style="font-size:12px;color:#1a1a1a;transform:matrix(0.37903,-0.01767,-0.00283,0.57743,622.70,123.64);-webkit-text-stroke:0.18px #1a1a1a">Ejetiru</div>
<div class="t" style="font-size:12px;color:#1a1a1a;transform:matrix(0.37575,-0.01752,-0.00373,0.57497,636.86,123.00);-webkit-text-stroke:0.18px #1a1a1a">Jusatu</div>
<div class="t" style="font-size:12px;color:#1a1a1a;transform:matrix(0.36507,-0.01702,-0.01045,0.55591,749.85,117.89);-webkit-text-stroke:0.18px #1a1a1a">2013</div>
<div class="t" style="font-size:12px;color:#1a1a1a;transform:matrix(0.36057,-0.01681,-0.01159,0.55252,763.63,117.27);-webkit-text-stroke:0.18px #1a1a1a">01/01/2013</div>
<div class="t" style="font-size:12px;color:#1a1a1a;transform:matrix(0.48509,-0.02398,0.02261,0.63811,257.73,150.58);-webkit-text-stroke:0.18px #1a1a1a">00379</div>
<div class="t" style="font-size:12px;color:#1a1a1a;transform:matrix(0.47672,-0.02357,0.02018,0.63270,283.36,149.36);-webkit-text-stroke:0.18px #1a1a1a">31/12/2013</div>
<div class="t" style="font-size:12px;color:#1a1a1a;transform:matrix(0.45002,-0.02225,0.01774,0.62717,320.42,147.57);-webkit-text-stroke:0.18px #1a1a1a">Sistema</div>
<div class="t" style="font-size:12px;color:#1a1a1a;transform:matrix(0.44505,-0.02200,0.01625,0.62376,341.43,146.56);-webkit-text-stroke:0.18px #1a1a1a">Partner</div>
<div class="t" style="font-size:12px;color:#1a1a1a;transform:matrix(0.44183,-0.02185,0.01530,0.62155,360.41,145.64);-webkit-text-stroke:0.18px #1a1a1a">v3</div>
<div class="t" style="font-size:12px;color:#1a1a1a;transform:matrix(0.44056,-0.02178,0.01492,0.62067,367.48,145.30);-webkit-text-stroke:0.18px #1a1a1a">-</div>
<div class="t" style="font-size:12px;color:#1a1a1a;transform:matrix(0.43789,-0.02165,0.01413,0.61883,370.73,145.15);-webkit-text-stroke:0.18px #1a1a1a">aluguel</div>
<div class="t" style="font-size:12px;color:#1a1a1a;transform:matrix(0.42055,-0.02079,0.00905,0.60669,440.51,141.80);-webkit-text-stroke:0.18px #1a1a1a">Sestamu</div>
<div class="t" style="font-size:12px;color:#1a1a1a;transform:matrix(0.41606,-0.02057,0.00775,0.60350,461.81,140.77);-webkit-text-stroke:0.18px #1a1a1a">Putnar</div>
<div class="t" style="font-size:12px;color:#1a1a1a;transform:matrix(0.41335,-0.02044,0.00697,0.60157,477.90,139.99);-webkit-text-stroke:0.18px #1a1a1a">v2</div>
<div class="t" style="font-size:12px;color:#1a1a1a;transform:matrix(0.41220,-0.02038,0.00663,0.60075,484.52,139.67);-webkit-text-stroke:0.18px #1a1a1a">-</div>
<div class="t" style="font-size:12px;color:#1a1a1a;transform:matrix(0.40998,-0.02027,0.00600,0.59916,487.56,139.54);-webkit-text-stroke:0.18px #1a1a1a">ulujual</div>
<div class="t" style="font-size:12px;color:#1a1a1a;transform:matrix(0.40572,-0.02006,0.00478,0.59610,503.16,138.79);-webkit-text-stroke:0.18px #1a1a1a">JantriSul</div>
<div class="t" style="font-size:12px;color:#1a1a1a;transform:matrix(0.40140,-0.01985,0.00355,0.59297,523.45,137.81);-webkit-text-stroke:0.18px #1a1a1a">Ljisteju</div>
<div class="t" style="font-size:12px;color:#1a1a1a;transform:matrix(0.39858,-0.01971,0.00275,0.59093,539.77,137.02);-webkit-text-stroke:0.18px #1a1a1a">uni</div>
<div class="t" style="font-size:12px;color:#1a1a1a;transform:matrix(0.39628,-0.01959,0.00210,0.58925,547.49,136.65);-webkit-text-stroke:0.18px #1a1a1a">1002</div>
<div class="t" style="font-size:12px;color:#1a1a1a;transform:matrix(0.37809,-0.01869,-0.00298,0.57582,622.67,133.05);-webkit-text-stroke:0.18px #1a1a1a">JantriSul</div>
<div class="t" style="font-size:12px;color:#1a1a1a;transform:matrix(0.37420,-0.01850,-0.00404,0.57290,641.58,132.13);-webkit-text-stroke:0.18px #1a1a1a">Ljisteju</div>
<div class="t" style="font-size:12px;color:#1a1a1a;transform:matrix(0.36472,-0.01803,-0.01043,0.55480,749.69,126.94);-webkit-text-stroke:0.18px #1a1a1a">2013</div>
<div class="t" style="font-size:12px;color:#1a1a1a;transform:matrix(0.36023,-0.01781,-0.01157,0.55143,763.45,126.28);-webkit-text-stroke:0.18px #1a1a1a">01/01/2013</div>
<div class="t" style="font-size:12px;color:#1a1a1a;transform:matrix(0.48448,-0.02532,0.02256,0.63664,258.11,160.97);-webkit-text-stroke:0.18px #1a1a1a">00378</div>
<div class="t" style="font-size:12px;color:#1a1a1a;transform:matrix(0.47613,-0.02489,0.02013,0.63125,283.71,159.68);-webkit-text-stroke:0.18px #1a1a1a">31/12/2013</div>
<div class="t" style="font-size:12px;color:#1a1a1a;transform:matrix(0.44947,-0.02349,0.01770,0.62575,320.72,157.79);-webkit-text-stroke:0.18px #1a1a1a">Sistema</div>
<div class="t" style="font-size:12px;color:#1a1a1a;transform:matrix(0.44451,-0.02323,0.01622,0.62236,341.70,156.72);-webkit-text-stroke:0.18px #1a1a1a">Partner</div>
<div class="t" style="font-size:12px;color:#1a1a1a;transform:matrix(0.44130,-0.02306,0.01526,0.62016,360.66,155.75);-webkit-text-stroke:0.18px #1a1a1a">v3</div>
<div class="t" style="font-size:12px;color:#1a1a1a;transform:matrix(0.44003,-0.02300,0.01489,0.61928,367.72,155.39);-webkit-text-stroke:0.18px #1a1a1a">-</div>
<div class="t" style="font-size:12px;color:#1a1a1a;transform:matrix(0.43737,-0.02286,0.01410,0.61745,370.97,155.23);-webkit-text-stroke:0.18px #1a1a1a">aluguel</div>
<div class="t" style="font-size:12px;color:#1a1a1a;transform:matrix(0.42008,-0.02196,0.00903,0.60537,440.66,151.69);-webkit-text-stroke:0.18px #1a1a1a">Sestamu</div>
<div class="t" style="font-size:12px;color:#1a1a1a;transform:matrix(0.41559,-0.02172,0.00773,0.60219,461.95,150.60);-webkit-text-stroke:0.18px #1a1a1a">Putnar</div>
<div class="t" style="font-size:12px;color:#1a1a1a;transform:matrix(0.41289,-0.02158,0.00695,0.60027,478.02,149.78);-webkit-text-stroke:0.18px #1a1a1a">v2</div>
<div class="t" style="font-size:12px;color:#1a1a1a;transform:matrix(0.41174,-0.02152,0.00662,0.59945,484.62,149.44);-webkit-text-stroke:0.18px #1a1a1a">-</div>
<div class="t" style="font-size:12px;color:#1a1a1a;transform:matrix(0.40952,-0.02140,0.00598,0.59787,487.66,149.29);-webkit-text-stroke:0.18px #1a1a1a">ulujual</div>
<div class="t" style="font-size:12px;color:#1a1a1a;transform:matrix(0.40566,-0.02120,0.00488,0.59509,503.24,148.50);-webkit-text-stroke:0.18px #1a1a1a">Mujatal</div>
<div class="t" style="font-size:12px;color:#1a1a1a;transform:matrix(0.40273,-0.02105,0.00404,0.59298,520.27,147.63);-webkit-text-stroke:0.18px #1a1a1a">uni</div>
<div class="t" style="font-size:12px;color:#1a1a1a;transform:matrix(0.40039,-0.02093,0.00338,0.59130,528.07,147.23);-webkit-text-stroke:0.18px #1a1a1a">1002</div>
<div class="t" style="font-size:12px;color:#1a1a1a;transform:matrix(0.37805,-0.01976,-0.00287,0.57488,622.62,142.43);-webkit-text-stroke:0.18px #1a1a1a">Mujatal</div>
<div class="t" style="font-size:12px;color:#1a1a1a;transform:matrix(0.36438,-0.01904,-0.01041,0.55369,749.52,135.97);-webkit-text-stroke:0.18px #1a1a1a">2013</div>
<div class="t" style="font-size:12px;color:#1a1a1a;transform:matrix(0.35989,-0.01881,-0.01155,0.55033,763.27,135.27);-webkit-text-stroke:0.18px #1a1a1a">01/01/2013</div>
<div class="t" style="font-size:12px;color:#1a1a1a;transform:matrix(0.48387,-0.02665,0.02251,0.63518,258.48,171.34);-webkit-text-stroke:0.18px #1a1a1a">00377</div>
<div class="t" style="font-size:12px;color:#1a1a1a;transform:matrix(0.47555,-0.02619,0.02009,0.62981,284.05,169.98);-webkit-text-stroke:0.18px #1a1a1a">31/12/2013</div>
<div class="t" style="font-size:12px;color:#1a1a1a;transform:matrix(0.44893,-0.02473,0.01766,0.62434,321.02,167.98);-webkit-text-stroke:0.18px #1a1a1a">Sistema</div>
<div class="t" style="font-size:12px;color:#1a1a1a;transform:matrix(0.44398,-0.02446,0.01618,0.62096,341.97,166.86);-webkit-text-stroke:0.18px #1a1a1a">Partner</div>
<div class="t" style="font-size:12px;color:#1a1a1a;transform:matrix(0.44078,-0.02428,0.01523,0.61877,360.91,165.83);-webkit-text-stroke:0.18px #1a1a1a">v3</div>
<div class="t" style="font-size:12px;color:#1a1a1a;transform:matrix(0.43951,-0.02421,0.01485,0.61790,367.96,165.45);-webkit-text-stroke:0.18px #1a1a1a">-</div>
<div class="t" style="font-size:12px;color:#1a1a1a;transform:matrix(0.43685,-0.02406,0.01407,0.61607,371.21,165.29);-webkit-text-stroke:0.18px #1a1a1a">aluguel</div>
<div class="t" style="font-size:12px;color:#1a1a1a;transform:matrix(0.41960,-0.02311,0.00901,0.60404,440.82,161.55);-webkit-text-stroke:0.18px #1a1a1a">Sestamu</div>
<div class="t" style="font-size:12px;color:#1a1a1a;transform:matrix(0.41513,-0.02287,0.00771,0.60088,462.08,160.41);-webkit-text-stroke:0.18px #1a1a1a">Putnar</div>
<div class="t" style="font-size:12px;color:#1a1a1a;transform:matrix(0.41243,-0.02272,0.00694,0.59897,478.13,159.54);-webkit-text-stroke:0.18px #1a1a1a">v2</div>
<div class="t" style="font-size:12px;color:#1a1a1a;transform:matrix(0.41128,-0.02265,0.00661,0.59815,484.73,159.18);-webkit-text-stroke:0.18px #1a1a1a">-</div>
<div class="t" style="font-size:12px;color:#1a1a1a;transform:matrix(0.40907,-0.02253,0.00597,0.59658,487.77,159.03);-webkit-text-stroke:0.18px #1a1a1a">ulujual</div>
<div class="t" style="font-size:12px;color:#1a1a1a;transform:matrix(0.40556,-0.02234,0.00497,0.59407,503.32,158.19);-webkit-text-stroke:0.18px #1a1a1a">Jakux</div>
<div class="t" style="font-size:12px;color:#1a1a1a;transform:matrix(0.40298,-0.02220,0.00423,0.59222,517.38,157.43);-webkit-text-stroke:0.18px #1a1a1a">uni</div>
<div class="t" style="font-size:12px;color:#1a1a1a;transform:matrix(0.40065,-0.02207,0.00357,0.59054,525.19,157.01);-webkit-text-stroke:0.18px #1a1a1a">1002</div>
<div class="t" style="font-size:12px;color:#1a1a1a;transform:matrix(0.37798,-0.02082,-0.00278,0.57393,622.58,151.79);-webkit-text-stroke:0.18px #1a1a1a">Jakux</div>
<div class="t" style="font-size:12px;color:#1a1a1a;transform:matrix(0.37572,-0.02070,-0.00340,0.57224,635.68,151.08);-webkit-text-stroke:0.18px #1a1a1a">Jis</div>
<div class="t" style="font-size:12px;color:#1a1a1a;transform:matrix(0.37353,-0.02058,-0.00400,0.57061,642.45,150.72);-webkit-text-stroke:0.18px #1a1a1a">Stujei</div>
<div class="t" style="font-size:12px;color:#1a1a1a;transform:matrix(0.36404,-0.02005,-0.01039,0.55259,749.36,144.98);-webkit-text-stroke:0.18px #1a1a1a">2013</div>
<div class="t" style="font-size:12px;color:#1a1a1a;transform:matrix(0.35956,-0.01981,-0.01152,0.54924,763.09,144.25);-webkit-text-stroke:0.18px #1a1a1a">01/01/2013</div>
<div class="t" style="font-size:12px;color:#1a1a1a;transform:matrix(0.48327,-0.02798,0.02246,0.63372,258.86,181.68);-webkit-text-stroke:0.18px #1a1a1a">00376</div>
<div class="t" style="font-size:12px;color:#1a1a1a;transform:matrix(0.47496,-0.02750,0.02004,0.62838,284.40,180.25);-webkit-text-stroke:0.18px #1a1a1a">31/12/2013</div>
<div class="t" style="font-size:12px;color:#1a1a1a;transform:matrix(0.44839,-0.02596,0.01762,0.62293,321.32,178.16);-webkit-text-stroke:0.18px #1a1a1a">Sistema</div>
<div class="t" style="font-size:12px;color:#1a1a1a;transform:matrix(0.44345,-0.02567,0.01614,0.61957,342.25,176.97);-webkit-text-stroke:0.18px #1a1a1a">Partner</div>
<div class="t" style="font-size:12px;color:#1a1a1a;transform:matrix(0.44025,-0.02549,0.01519,0.61739,361.16,175.90);-webkit-text-stroke:0.18px #1a1a1a">v3</div>
<div class="t" style="font-size:12px;color:#1a1a1a;transform:matrix(0.43899,-0.02542,0.01482,0.61652,368.21,175.49);-webkit-text-stroke:0.18px #1a1a1a">-</div>
<div class="t" style="font-size:12px;color:#1a1a1a;transform:matrix(0.43634,-0.02526,0.01403,0.61470,371.45,175.32);-webkit-text-stroke:0.18px #1a1a1a">aluguel</div>
<div class="t" style="font-size:12px;color:#1a1a1a;transform:matrix(0.41912,-0.02427,0.00899,0.60273,440.98,171.39);-webkit-text-stroke:0.18px #1a1a1a">Sestamu</div>
<div class="t" style="font-size:12px;color:#1a1a1a;transform:matrix(0.41466,-0.02401,0.00770,0.59958,462.22,170.19);-webkit-text-stroke:0.18px #1a1a1a">Putnar</div>
<div class="t" style="font-size:12px;color:#1a1a1a;transform:matrix(0.41197,-0.02385,0.00692,0.59767,478.25,169.28);-webkit-text-stroke:0.18px #1a1a1a">v2</div>
<div class="t" style="font-size:12px;color:#1a1a1a;transform:matrix(0.41082,-0.02378,0.00659,0.59686,484.84,168.90);-webkit-text-stroke:0.18px #1a1a1a">-</div>
<div class="t" style="font-size:12px;color:#1a1a1a;transform:matrix(0.40852,-0.02365,0.00593,0.59522,487.87,168.74);-webkit-text-stroke:0.18px #1a1a1a">Mutrex</div>
<div class="t" style="font-size:12px;color:#1a1a1a;transform:matrix(0.40324,-0.02335,0.00442,0.59145,504.26,167.82);-webkit-text-stroke:0.18px #1a1a1a">Jenunejuzãli</div>
<div class="t" style="font-size:12px;color:#1a1a1a;transform:matrix(0.39810,-0.02305,0.00296,0.58775,532.47,166.22);-webkit-text-stroke:0.18px #1a1a1a">Vesuul</div>
<div class="t" style="font-size:12px;color:#1a1a1a;transform:matrix(0.39593,-0.02292,0.00235,0.58618,548.13,165.33);-webkit-text-stroke:0.18px #1a1a1a">-</div>
<div class="t" style="font-size:12px;color:#1a1a1a;transform:matrix(0.39384,-0.02280,0.00176,0.58467,551.05,165.17);-webkit-text-stroke:0.18px #1a1a1a">ulujual</div>
<div class="t" style="font-size:12px;color:#1a1a1a;transform:matrix(0.39074,-0.02262,0.00088,0.58241,566.02,164.32);-webkit-text-stroke:0.18px #1a1a1a">1002</div>
<div class="t" style="font-size:12px;color:#1a1a1a;transform:matrix(0.37739,-0.02185,-0.00283,0.57259,622.54,161.13);-webkit-text-stroke:0.18px #1a1a1a">Mutryx</div>
<div class="t" style="font-size:12px;color:#1a1a1a;transform:matrix(0.36369,-0.02106,-0.01037,0.55149,749.19,153.97);-webkit-text-stroke:0.18px #1a1a1a">2013</div>
<div class="t" style="font-size:12px;color:#1a1a1a;transform:matrix(0.35922,-0.02080,-0.01150,0.54816,762.91,153.20);-webkit-text-stroke:0.18px #1a1a1a">01/01/2013</div>
<div class="t" style="font-size:12px;color:#1a1a1a;transform:matrix(0.48267,-0.02930,0.02241,0.63227,259.24,192.00);-webkit-text-stroke:0.18px #1a1a1a">00375</div>
<div class="t" style="font-size:12px;color:#1a1a1a;transform:matrix(0.47438,-0.02879,0.02000,0.62695,284.74,190.50);-webkit-text-stroke:0.18px #1a1a1a">31/12/2013</div>
<div class="t" style="font-size:12px;color:#1a1a1a;transform:matrix(0.44785,-0.02718,0.01758,0.62153,321.61,188.31);-webkit-text-stroke:0.18px #1a1a1a">Sistema</div>
<div class="t" style="font-size:12px;color:#1a1a1a;transform:matrix(0.44292,-0.02689,0.01611,0.61818,342.52,187.06);-webkit-text-stroke:0.18px #1a1a1a">Partner</div>
<div class="t" style="font-size:12px;color:#1a1a1a;transform:matrix(0.43973,-0.02669,0.01516,0.61601,361.41,185.94);-webkit-text-stroke:0.18px #1a1a1a">v3</div>
<div class="t" style="font-size:12px;color:#1a1a1a;transform:matrix(0.43847,-0.02662,0.01479,0.61515,368.45,185.52);-webkit-text-stroke:0.18px #1a1a1a">-</div>
<div class="t" style="font-size:12px;color:#1a1a1a;transform:matrix(0.43583,-0.02645,0.01400,0.61333,371.69,185.33);-webkit-text-stroke:0.18px #1a1a1a">aluguel</div>
<div class="t" style="font-size:12px;color:#1a1a1a;transform:matrix(0.41865,-0.02541,0.00897,0.60141,441.14,181.22);-webkit-text-stroke:0.18px #1a1a1a">Sestamu</div>
<div class="t" style="font-size:12px;color:#1a1a1a;transform:matrix(0.41420,-0.02514,0.00768,0.59828,462.35,179.95);-webkit-text-stroke:0.18px #1a1a1a">Putnar</div>
<div class="t" style="font-size:12px;color:#1a1a1a;transform:matrix(0.41151,-0.02498,0.00691,0.59638,478.36,179.00);-webkit-text-stroke:0.18px #1a1a1a">v2</div>
<div class="t" style="font-size:12px;color:#1a1a1a;transform:matrix(0.41037,-0.02491,0.00658,0.59557,484.95,178.60);-webkit-text-stroke:0.18px #1a1a1a">-</div>
<div class="t" style="font-size:12px;color:#1a1a1a;transform:matrix(0.40817,-0.02478,0.00595,0.59401,487.98,178.43);-webkit-text-stroke:0.18px #1a1a1a">ulujual</div>
<div class="t" style="font-size:12px;color:#1a1a1a;transform:matrix(0.40410,-0.02453,0.00478,0.59112,503.51,177.51);-webkit-text-stroke:0.18px #1a1a1a">Elajunta</div>
<div class="t" style="font-size:12px;color:#1a1a1a;transform:matrix(0.40097,-0.02434,0.00389,0.58888,522.36,176.39);-webkit-text-stroke:0.18px #1a1a1a">uni</div>
<div class="t" style="font-size:12px;color:#1a1a1a;transform:matrix(0.39866,-0.02420,0.00323,0.58721,530.13,175.93);-webkit-text-stroke:0.18px #1a1a1a">1002</div>
<div class="t" style="font-size:12px;color:#1a1a1a;transform:matrix(0.37669,-0.02287,-0.00291,0.57117,622.51,170.45);-webkit-text-stroke:0.18px #1a1a1a">Elajunta</div>
<div class="t" style="font-size:12px;color:#1a1a1a;transform:matrix(0.37250,-0.02261,-0.00407,0.56805,640.11,169.41);-webkit-text-stroke:0.18px #1a1a1a">Jnauteva</div>
<div class="t" style="font-size:12px;color:#1a1a1a;transform:matrix(0.36918,-0.02241,-0.00497,0.56558,659.48,168.26);-webkit-text-stroke:0.18px #1a1a1a">Wek</div>
<div class="t" style="font-size:12px;color:#1a1a1a;transform:matrix(0.36335,-0.02206,-0.01035,0.55039,749.03,162.94);-webkit-text-stroke:0.18px #1a1a1a">2013</div>
<div class="t" style="font-size:12px;color:#1a1a1a;transform:matrix(0.35889,-0.02178,-0.01148,0.54707,762.74,162.14);-webkit-text-stroke:0.18px #1a1a1a">01/01/2013</div>
<div class="t" style="font-size:12px;color:#1a1a1a;transform:matrix(0.48207,-0.03061,0.02236,0.63082,259.61,202.30);-webkit-text-stroke:0.18px #1a1a1a">00374</div>
<div class="t" style="font-size:12px;color:#1a1a1a;transform:matrix(0.47380,-0.03009,0.01995,0.62553,285.08,200.73);-webkit-text-stroke:0.18px #1a1a1a">31/12/2013</div>
<div class="t" style="font-size:12px;color:#1a1a1a;transform:matrix(0.44731,-0.02840,0.01754,0.62013,321.91,198.43);-webkit-text-stroke:0.18px #1a1a1a">Sistema</div>
<div class="t" style="font-size:12px;color:#1a1a1a;transform:matrix(0.44239,-0.02809,0.01607,0.61680,342.79,197.13);-webkit-text-stroke:0.18px #1a1a1a">Partner</div>
<div class="t" style="font-size:12px;color:#1a1a1a;transform:matrix(0.43921,-0.02789,0.01513,0.61463,361.66,195.95);-webkit-text-stroke:0.18px #1a1a1a">v3</div>
<div class="t" style="font-size:12px;color:#1a1a1a;transform:matrix(0.43795,-0.02781,0.01475,0.61378,368.69,195.51);-webkit-text-stroke:0.18px #1a1a1a">-</div>
<div class="t" style="font-size:12px;color:#1a1a1a;transform:matrix(0.43532,-0.02764,0.01397,0.61197,371.92,195.32);-webkit-text-stroke:0.18px #1a1a1a">aluguel</div>
<div class="t" style="font-size:12px;color:#1a1a1a;transform:matrix(0.41818,-0.02655,0.00895,0.60010,441.29,191.02);-webkit-text-stroke:0.18px #1a1a1a">Sestamu</div>
<div class="t" style="font-size:12px;color:#1a1a1a;transform:matrix(0.41373,-0.02627,0.00766,0.59699,462.48,189.70);-webkit-text-stroke:0.18px #1a1a1a">Putnar</div>
<div class="t" style="font-size:12px;color:#1a1a1a;transform:matrix(0.41105,-0.02610,0.00689,0.59509,478.48,188.70);-webkit-text-stroke:0.18px #1a1a1a">v2</div>
<div class="t" style="font-size:12px;color:#1a1a1a;transform:matrix(0.40991,-0.02603,0.00656,0.59429,485.06,188.29);-webkit-text-stroke:0.18px #1a1a1a">-</div>
<div class="t" style="font-size:12px;color:#1a1a1a;transform:matrix(0.40772,-0.02589,0.00593,0.59274,488.08,188.11);-webkit-text-stroke:0.18px #1a1a1a">ulujual</div>
<div class="t" style="font-size:12px;color:#1a1a1a;transform:matrix(0.40309,-0.02560,0.00461,0.58945,503.61,187.15);-webkit-text-stroke:0.18px #1a1a1a">WOJasejn</div>
<div class="t" style="font-size:12px;color:#1a1a1a;transform:matrix(0.39892,-0.02533,0.00342,0.58646,527.24,185.67);-webkit-text-stroke:0.18px #1a1a1a">1002</div>
<div class="t" style="font-size:12px;color:#1a1a1a;transform:matrix(0.37580,-0.02386,-0.00305,0.56962,622.49,179.76);-webkit-text-stroke:0.18px #1a1a1a">WOJasejn</div>
<div class="t" style="font-size:12px;color:#1a1a1a;transform:matrix(0.36301,-0.02305,-0.01033,0.54929,748.87,171.90);-webkit-text-stroke:0.18px #1a1a1a">2013</div>
<div class="t" style="font-size:12px;color:#1a1a1a;transform:matrix(0.35856,-0.02277,-0.01145,0.54599,762.56,171.06);-webkit-text-stroke:0.18px #1a1a1a">01/01/2013</div>
<div class="t" style="font-size:12px;color:#1a1a1a;transform:matrix(0.48147,-0.03192,0.02231,0.62938,259.98,212.57);-webkit-text-stroke:0.18px #1a1a1a">00373</div>
<div class="t" style="font-size:12px;color:#1a1a1a;transform:matrix(0.47322,-0.03137,0.01991,0.62411,285.43,210.93);-webkit-text-stroke:0.18px #1a1a1a">31/12/2013</div>
<div class="t" style="font-size:12px;color:#1a1a1a;transform:matrix(0.44677,-0.02962,0.01750,0.61873,322.21,208.54);-webkit-text-stroke:0.18px #1a1a1a">Sistema</div>
<div class="t" style="font-size:12px;color:#1a1a1a;transform:matrix(0.44187,-0.02929,0.01604,0.61542,343.06,207.18);-webkit-text-stroke:0.18px #1a1a1a">Partner</div>
<div class="t" style="font-size:12px;color:#1a1a1a;transform:matrix(0.43869,-0.02908,0.01509,0.61326,361.91,205.95);-webkit-text-stroke:0.18px #1a1a1a">v3</div>
<div class="t" style="font-size:12px;color:#1a1a1a;transform:matrix(0.43744,-0.02900,0.01472,0.61241,368.93,205.49);-webkit-text-stroke:0.18px #1a1a1a">-</div>
<div class="t" style="font-size:12px;color:#1a1a1a;transform:matrix(0.43480,-0.02882,0.01394,0.61061,372.16,205.29);-webkit-text-stroke:0.18px #1a1a1a">aluguel</div>
<div class="t" style="font-size:12px;color:#1a1a1a;transform:matrix(0.41770,-0.02769,0.00893,0.59880,441.45,200.80);-webkit-text-stroke:0.18px #1a1a1a">Sestamu</div>
<div class="t" style="font-size:12px;color:#1a1a1a;transform:matrix(0.41327,-0.02740,0.00765,0.59570,462.62,199.42);-webkit-text-stroke:0.18px #1a1a1a">Putnar</div>
<div class="t" style="font-size:12px;color:#1a1a1a;transform:matrix(0.41059,-0.02722,0.00688,0.59381,478.59,198.37);-webkit-text-stroke:0.18px #1a1a1a">v2</div>
<div class="t" style="font-size:12px;color:#1a1a1a;transform:matrix(0.40946,-0.02714,0.00655,0.59301,485.16,197.94);-webkit-text-stroke:0.18px #1a1a1a">-</div>
<div class="t" style="font-size:12px;color:#1a1a1a;transform:matrix(0.40727,-0.02700,0.00592,0.59146,488.18,197.76);-webkit-text-stroke:0.18px #1a1a1a">ulujual</div>
<div class="t" style="font-size:12px;color:#1a1a1a;transform:matrix(0.40316,-0.02673,0.00474,0.58855,503.69,196.75);-webkit-text-stroke:0.18px #1a1a1a">Pranwar</div>
<div class="t" style="font-size:12px;color:#1a1a1a;transform:matrix(0.39973,-0.02650,0.00377,0.58611,523.03,195.49);-webkit-text-stroke:0.18px #1a1a1a">Ena</div>
<div class="t" style="font-size:12px;color:#1a1a1a;transform:matrix(0.39768,-0.02636,0.00319,0.58464,532.90,194.85);-webkit-text-stroke:0.18px #1a1a1a">uni</div>
<div class="t" style="font-size:12px;color:#1a1a1a;transform:matrix(0.39540,-0.02621,0.00254,0.58300,540.60,194.35);-webkit-text-stroke:0.18px #1a1a1a">1002</div>
<div class="t" style="font-size:12px;color:#1a1a1a;transform:matrix(0.37587,-0.02492,-0.00292,0.56878,622.44,189.04);-webkit-text-stroke:0.18px #1a1a1a">Pranwar</div>
<div class="t" style="font-size:12px;color:#1a1a1a;transform:matrix(0.37119,-0.02461,-0.00420,0.56531,640.51,187.87);-webkit-text-stroke:0.18px #1a1a1a">Enaulujans</div>
<div class="t" style="font-size:12px;color:#1a1a1a;transform:matrix(0.36267,-0.02404,-0.01030,0.54820,748.70,180.84);-webkit-text-stroke:0.18px #1a1a1a">2013</div>
<div class="t" style="font-size:12px;color:#1a1a1a;transform:matrix(0.35822,-0.02375,-0.01143,0.54491,762.39,179.96);-webkit-text-stroke:0.18px #1a1a1a">01/01/2013</div>
<div class="t" style="font-size:12px;color:#1a1a1a;transform:matrix(0.48087,-0.03322,0.02225,0.62794,260.36,222.82);-webkit-text-stroke:0.18px #1a1a1a">00371</div>
<div class="t" style="font-size:12px;color:#1a1a1a;transform:matrix(0.47264,-0.03265,0.01986,0.62270,285.77,221.11);-webkit-text-stroke:0.18px #1a1a1a">31/01/2013</div>
<div class="t" style="font-size:12px;color:#1a1a1a;transform:matrix(0.44356,-0.03064,0.01666,0.61554,322.60,218.63);-webkit-text-stroke:0.18px #1a1a1a">Desenvolvimento</div>
<div class="t" style="font-size:12px;color:#1a1a1a;transform:matrix(0.41551,-0.02870,0.00841,0.59630,441.67,210.56);-webkit-text-stroke:0.18px #1a1a1a">Jasanvilvenanti</div>
<div class="t" style="font-size:12px;color:#1a1a1a;transform:matrix(0.40894,-0.02825,0.00652,0.59169,477.09,208.15);-webkit-text-stroke:0.18px #1a1a1a">sestamu</div>
<div class="t" style="font-size:12px;color:#1a1a1a;transform:matrix(0.40509,-0.02798,0.00541,0.58898,496.99,206.80);-webkit-text-stroke:0.18px #1a1a1a">jatzla</div>
<div class="t" style="font-size:12px;color:#1a1a1a;transform:matrix(0.40042,-0.02766,0.00408,0.58566,509.73,205.94);-webkit-text-stroke:0.18px #1a1a1a">jirasjenjanta</div>
<div class="t" style="font-size:12px;color:#1a1a1a;transform:matrix(0.39516,-0.02730,0.00259,0.58190,536.69,204.11);-webkit-text-stroke:0.18px #1a1a1a">aunjárei</div>
<div class="t" style="font-size:12px;color:#1a1a1a;transform:matrix(0.39199,-0.02708,0.00169,0.57962,554.86,202.88);-webkit-text-stroke:0.18px #1a1a1a">JAJ</div>
<div class="t" style="font-size:12px;color:#1a1a1a;transform:matrix(0.37654,-0.02601,-0.00262,0.56838,622.38,198.30);-webkit-text-stroke:0.18px #1a1a1a">JAJ</div>
<div class="t" style="font-size:12px;color:#1a1a1a;transform:matrix(0.35866,-0.02478,-0.00749,0.55507,697.70,193.21);-webkit-text-stroke:0.18px #1a1a1a">Jesdenu</div>
<div class="t" style="font-size:12px;color:#1a1a1a;transform:matrix(0.36233,-0.02503,-0.01028,0.54712,748.54,189.76);-webkit-text-stroke:0.18px #1a1a1a">2012</div>
<div class="t" style="font-size:12px;color:#1a1a1a;transform:matrix(0.35793,-0.02473,-0.01140,0.54387,762.21,188.85);-webkit-text-stroke:0.18px #1a1a1a">19/11/2012</div>
<div class="t" style="font-size:12px;color:#1a1a1a;transform:matrix(0.48027,-0.03451,0.02220,0.62651,260.73,233.05);-webkit-text-stroke:0.18px #1a1a1a">00370</div>
<div class="t" style="font-size:12px;color:#1a1a1a;transform:matrix(0.47207,-0.03392,0.01982,0.62129,286.11,231.27);-webkit-text-stroke:0.18px #1a1a1a">31/01/2013</div>
<div class="t" style="font-size:12px;color:#1a1a1a;transform:matrix(0.44303,-0.03184,0.01662,0.61417,322.90,228.68);-webkit-text-stroke:0.18px #1a1a1a">Desenvolvimento</div>
<div class="t" style="font-size:12px;color:#1a1a1a;transform:matrix(0.41504,-0.02983,0.00839,0.59501,441.82,220.29);-webkit-text-stroke:0.18px #1a1a1a">Jasanvilvenanti</div>
<div class="t" style="font-size:12px;color:#1a1a1a;transform:matrix(0.40849,-0.02936,0.00650,0.59042,477.21,217.79);-webkit-text-stroke:0.18px #1a1a1a">sestamu</div>
<div class="t" style="font-size:12px;color:#1a1a1a;transform:matrix(0.40329,-0.02898,0.00501,0.58675,497.11,216.39);-webkit-text-stroke:0.18px #1a1a1a">waajusteni</div>
<div class="t" style="font-size:12px;color:#1a1a1a;transform:matrix(0.39912,-0.02868,0.00382,0.58380,521.30,214.68);-webkit-text-stroke:0.18px #1a1a1a">Jruw</div>
<div class="t" style="font-size:12px;color:#1a1a1a;transform:matrix(0.39593,-0.02845,0.00292,0.58153,532.75,213.87);-webkit-text-stroke:0.18px #1a1a1a">Pijutiru</div>
<div class="t" style="font-size:12px;color:#1a1a1a;transform:matrix(0.37593,-0.02702,-0.00268,0.56704,622.34,207.55);-webkit-text-stroke:0.18px #1a1a1a">Jruw</div>
<div class="t" style="font-size:12px;color:#1a1a1a;transform:matrix(0.35946,-0.02583,-0.00717,0.55481,697.57,202.25);-webkit-text-stroke:0.18px #1a1a1a">Jiili</div>
<div class="t" style="font-size:12px;color:#1a1a1a;transform:matrix(0.35750,-0.02569,-0.00770,0.55333,704.76,201.74);-webkit-text-stroke:0.18px #1a1a1a">Jurlo</div>
<div class="t" style="font-size:12px;color:#1a1a1a;transform:matrix(0.36198,-0.02601,-0.01026,0.54603,748.38,198.67);-webkit-text-stroke:0.18px #1a1a1a">2012</div>
<div class="t" style="font-size:12px;color:#1a1a1a;transform:matrix(0.35759,-0.02570,-0.01138,0.54279,762.03,197.71);-webkit-text-stroke:0.18px #1a1a1a">20/11/2012</div>
<div class="t" style="font-size:12px;color:#1a1a1a;transform:matrix(0.47968,-0.03580,0.02215,0.62508,261.10,243.25);-webkit-text-stroke:0.18px #1a1a1a">00368</div>
<div class="t" style="font-size:12px;color:#1a1a1a;transform:matrix(0.47149,-0.03519,0.01977,0.61988,286.45,241.40);-webkit-text-stroke:0.18px #1a1a1a">28/12/2012</div>
<div class="t" style="font-size:12px;color:#1a1a1a;transform:matrix(0.44523,-0.03323,0.01740,0.61463,323.09,238.71);-webkit-text-stroke:0.18px #1a1a1a">Suporte</div>
<div class="t" style="font-size:12px;color:#1a1a1a;transform:matrix(0.41696,-0.03112,0.00907,0.59537,441.90,230.00);-webkit-text-stroke:0.18px #1a1a1a">Supita</div>
<div class="t" style="font-size:12px;color:#1a1a1a;transform:matrix(0.41310,-0.03083,0.00795,0.59269,457.49,228.86);-webkit-text-stroke:0.18px #1a1a1a">jevanis</div>
<div class="t" style="font-size:12px;color:#1a1a1a;transform:matrix(0.40765,-0.03043,0.00638,0.58888,474.34,227.63);-webkit-text-stroke:0.18px #1a1a1a">utanjemantis</div>
<div class="t" style="font-size:12px;color:#1a1a1a;transform:matrix(0.40179,-0.02999,0.00470,0.58476,503.42,225.50);-webkit-text-stroke:0.18px #1a1a1a">JOPAME</div>
<div class="t" style="font-size:12px;color:#1a1a1a;transform:matrix(0.39722,-0.02965,0.00340,0.58152,524.22,223.97);-webkit-text-stroke:0.18px #1a1a1a">iut/1001</div>
<div class="t" style="font-size:12px;color:#1a1a1a;transform:matrix(0.37457,-0.02796,-0.00294,0.56516,622.32,216.78);-webkit-text-stroke:0.18px #1a1a1a">JOPAME</div>
<div class="t" style="font-size:12px;color:#1a1a1a;transform:matrix(0.35773,-0.02670,-0.00753,0.55266,697.48,211.28);-webkit-text-stroke:0.18px #1a1a1a">Alena/Ele</div>
<div class="t" style="font-size:12px;color:#1a1a1a;transform:matrix(0.36165,-0.02699,-0.01024,0.54495,748.22,207.55);-webkit-text-stroke:0.18px #1a1a1a">2012</div>
<div class="t" style="font-size:12px;color:#1a1a1a;transform:matrix(0.35723,-0.02666,-0.01136,0.54170,761.86,206.56);-webkit-text-stroke:0.18px #1a1a1a">17/10/2012</div>
<div class="t" style="font-size:12px;color:#1a1a1a;transform:matrix(0.47909,-0.03709,0.02210,0.62365,261.47,253.43);-webkit-text-stroke:0.18px #1a1a1a">00363</div>
<div class="t" style="font-size:12px;color:#1a1a1a;transform:matrix(0.47092,-0.03645,0.01973,0.61848,286.78,251.51);-webkit-text-stroke:0.18px #1a1a1a">31/08/2012</div>
<div class="t" style="font-size:12px;color:#1a1a1a;transform:matrix(0.44463,-0.03442,0.01734,0.61320,323.39,248.72);-webkit-text-stroke:0.18px #1a1a1a">Sistema</div>
<div class="t" style="font-size:12px;color:#1a1a1a;transform:matrix(0.43977,-0.03404,0.01589,0.60995,344.14,247.14);-webkit-text-stroke:0.18px #1a1a1a">Partner</div>
<div class="t" style="font-size:12px;color:#1a1a1a;transform:matrix(0.43662,-0.03380,0.01496,0.60783,362.90,245.71);-webkit-text-stroke:0.18px #1a1a1a">v3</div>
<div class="t" style="font-size:12px;color:#1a1a1a;transform:matrix(0.43538,-0.03370,0.01459,0.60700,369.89,245.18);-webkit-text-stroke:0.18px #1a1a1a">-</div>
<div class="t" style="font-size:12px;color:#1a1a1a;transform:matrix(0.43214,-0.03345,0.01363,0.60480,373.12,244.94);-webkit-text-stroke:0.18px #1a1a1a">aquisição</div>
<div class="t" style="font-size:12px;color:#1a1a1a;transform:matrix(0.41583,-0.03219,0.00885,0.59362,442.07,239.70);-webkit-text-stroke:0.18px #1a1a1a">Sestamu</div>
<div class="t" style="font-size:12px;color:#1a1a1a;transform:matrix(0.41143,-0.03185,0.00758,0.59057,463.14,238.09);-webkit-text-stroke:0.18px #1a1a1a">Putnar</div>
<div class="t" style="font-size:12px;color:#1a1a1a;transform:matrix(0.40724,-0.03152,0.00637,0.58765,479.08,236.88);-webkit-text-stroke:0.18px #1a1a1a">amessãi</div>
<div class="t" style="font-size:12px;color:#1a1a1a;transform:matrix(0.40266,-0.03117,0.00506,0.58444,498.63,235.40);-webkit-text-stroke:0.18px #1a1a1a">jjumartis</div>
<div class="t" style="font-size:12px;color:#1a1a1a;transform:matrix(0.39876,-0.03087,0.00395,0.58168,517.96,233.92);-webkit-text-stroke:0.18px #1a1a1a">Jantul</div>
<div class="t" style="font-size:12px;color:#1a1a1a;transform:matrix(0.39659,-0.03070,0.00333,0.58014,532.04,232.84);-webkit-text-stroke:0.18px #1a1a1a">X</div>
<div class="t" style="font-size:12px;color:#1a1a1a;transform:matrix(0.39518,-0.03059,0.00293,0.57914,536.55,232.50);-webkit-text-stroke:0.18px #1a1a1a">Sili</div>
<div class="t" style="font-size:12px;color:#1a1a1a;transform:matrix(0.39274,-0.03040,0.00224,0.57740,544.20,231.93);-webkit-text-stroke:0.18px #1a1a1a">Laipiji</div>
<div class="t" style="font-size:12px;color:#1a1a1a;transform:matrix(0.37488,-0.02902,-0.00274,0.56450,622.27,225.99);-webkit-text-stroke:0.18px #1a1a1a">Jantul</div>
<div class="t" style="font-size:12px;color:#1a1a1a;transform:matrix(0.37140,-0.02875,-0.00370,0.56195,635.54,224.98);-webkit-text-stroke:0.18px #1a1a1a">aXumas</div>
<div class="t" style="font-size:12px;color:#1a1a1a;transform:matrix(0.35892,-0.02778,-0.00710,0.55270,697.34,220.27);-webkit-text-stroke:0.18px #1a1a1a">Jr.</div>
<div class="t" style="font-size:12px;color:#1a1a1a;transform:matrix(0.35697,-0.02763,-0.00762,0.55123,703.09,219.84);-webkit-text-stroke:0.18px #1a1a1a">Ãselu</div>
<div class="t" style="font-size:12px;color:#1a1a1a;transform:matrix(0.36131,-0.02797,-0.01022,0.54387,748.05,216.42);-webkit-text-stroke:0.18px #1a1a1a">2012</div>
<div class="t" style="font-size:12px;color:#1a1a1a;transform:matrix(0.35690,-0.02763,-0.01134,0.54064,761.68,215.39);-webkit-text-stroke:0.18px #1a1a1a">03/08/2012</div>
<div class="t" style="font-size:12px;color:#1a1a1a;transform:matrix(0.47849,-0.03836,0.02205,0.62224,261.84,263.59);-webkit-text-stroke:0.18px #1a1a1a">00361</div>
<div class="t" style="font-size:12px;color:#1a1a1a;transform:matrix(0.47034,-0.03771,0.01968,0.61709,287.12,261.60);-webkit-text-stroke:0.18px #1a1a1a">31/12/2012</div>
<div class="t" style="font-size:12px;color:#1a1a1a;transform:matrix(0.44145,-0.03539,0.01651,0.61006,323.78,258.72);-webkit-text-stroke:0.18px #1a1a1a">Desenvolvimento</div>
<div class="t" style="font-size:12px;color:#1a1a1a;transform:matrix(0.41365,-0.03316,0.00834,0.59116,442.29,249.38);-webkit-text-stroke:0.18px #1a1a1a">Jasanvilvenanti</div>
<div class="t" style="font-size:12px;color:#1a1a1a;transform:matrix(0.40714,-0.03264,0.00646,0.58663,477.55,246.59);-webkit-text-stroke:0.18px #1a1a1a">sestamu</div>
<div class="t" style="font-size:12px;color:#1a1a1a;transform:matrix(0.40421,-0.03241,0.00562,0.58459,497.35,245.02);-webkit-text-stroke:0.18px #1a1a1a">ja</div>
<div class="t" style="font-size:12px;color:#1a1a1a;transform:matrix(0.40135,-0.03218,0.00480,0.58257,502.50,244.62);-webkit-text-stroke:0.18px #1a1a1a">amessãi</div>
<div class="t" style="font-size:12px;color:#1a1a1a;transform:matrix(0.39851,-0.03195,0.00399,0.58058,521.75,243.09);-webkit-text-stroke:0.18px #1a1a1a">ja</div>
<div class="t" style="font-size:12px;color:#1a1a1a;transform:matrix(0.39571,-0.03173,0.00320,0.57859,526.83,242.70);-webkit-text-stroke:0.18px #1a1a1a">jjumartis</div>
<div class="t" style="font-size:12px;color:#1a1a1a;transform:matrix(0.39190,-0.03142,0.00212,0.57589,545.82,241.20);-webkit-text-stroke:0.18px #1a1a1a">Jantul</div>
<div class="t" style="font-size:12px;color:#1a1a1a;transform:matrix(0.38818,-0.03112,0.00107,0.57323,559.69,240.11);-webkit-text-stroke:0.18px #1a1a1a">aXumas</div>
<div class="t" style="font-size:12px;color:#1a1a1a;transform:matrix(0.38575,-0.03093,0.00039,0.57149,578.05,238.65);-webkit-text-stroke:0.18px #1a1a1a">-</div>
<div class="t" style="font-size:12px;color:#1a1a1a;transform:matrix(0.38328,-0.03073,-0.00030,0.56971,580.91,238.44);-webkit-text-stroke:0.18px #1a1a1a">majlreus</div>
<div class="t" style="font-size:12px;color:#1a1a1a;transform:matrix(0.37450,-0.03003,-0.00274,0.56335,622.23,235.18);-webkit-text-stroke:0.18px #1a1a1a">Jantul</div>
<div class="t" style="font-size:12px;color:#1a1a1a;transform:matrix(0.37103,-0.02975,-0.00369,0.56080,635.48,234.14);-webkit-text-stroke:0.18px #1a1a1a">aXumas</div>
<div class="t" style="font-size:12px;color:#1a1a1a;transform:matrix(0.36097,-0.02894,-0.01020,0.54280,747.89,225.27);-webkit-text-stroke:0.18px #1a1a1a">2012</div>
<div class="t" style="font-size:12px;color:#1a1a1a;transform:matrix(0.35657,-0.02859,-0.01132,0.53957,761.51,224.21);-webkit-text-stroke:0.18px #1a1a1a">31/07/2012</div>
<div class="t" style="font-size:12px;color:#1a1a1a;transform:matrix(0.47790,-0.03963,0.02200,0.62082,262.20,273.72);-webkit-text-stroke:0.18px #1a1a1a">00360</div>
<div class="t" style="font-size:12px;color:#1a1a1a;transform:matrix(0.46977,-0.03896,0.01964,0.61570,287.46,271.67);-webkit-text-stroke:0.18px #1a1a1a">22/01/2013</div>
<div class="t" style="font-size:12px;color:#1a1a1a;transform:matrix(0.44200,-0.03666,0.01680,0.60943,324.02,268.69);-webkit-text-stroke:0.18px #1a1a1a">Programação</div>
<div class="t" style="font-size:12px;color:#1a1a1a;transform:matrix(0.41489,-0.03441,0.00882,0.59106,442.38,259.02);-webkit-text-stroke:0.18px #1a1a1a">Sestamu</div>
<div class="t" style="font-size:12px;color:#1a1a1a;transform:matrix(0.41052,-0.03405,0.00755,0.58804,463.41,257.30);-webkit-text-stroke:0.18px #1a1a1a">Putnar</div>
<div class="t" style="font-size:12px;color:#1a1a1a;transform:matrix(0.40788,-0.03383,0.00679,0.58620,479.28,256.00);-webkit-text-stroke:0.18px #1a1a1a">v3</div>
<div class="t" style="font-size:12px;color:#1a1a1a;transform:matrix(0.37398,-0.03102,-0.00277,0.56209,622.19,244.35);-webkit-text-stroke:0.18px #1a1a1a">Putnar</div>
<div class="t" style="font-size:12px;color:#1a1a1a;transform:matrix(0.37174,-0.03083,-0.00339,0.56045,636.65,243.16);-webkit-text-stroke:0.18px #1a1a1a">IS</div>
<div class="t" style="font-size:12px;color:#1a1a1a;transform:matrix(0.36063,-0.02991,-0.01018,0.54173,747.73,234.11);-webkit-text-stroke:0.18px #1a1a1a">2012</div>
<div class="t" style="font-size:12px;color:#1a1a1a;transform:matrix(0.35624,-0.02954,-0.01130,0.53852,761.34,233.00);-webkit-text-stroke:0.18px #1a1a1a">18/07/2012</div>
<div class="t" style="font-size:12px;color:#1a1a1a;transform:matrix(0.47731,-0.04090,0.02195,0.61941,262.57,283.83);-webkit-text-stroke:0.18px #1a1a1a">00359</div>
<div class="t" style="font-size:12px;color:#1a1a1a;transform:matrix(0.46920,-0.04020,0.01959,0.61431,287.80,281.71);-webkit-text-stroke:0.18px #1a1a1a">30/09/2012</div>
<div class="t" style="font-size:12px;color:#1a1a1a;transform:matrix(0.44311,-0.03797,0.01725,0.60915,324.26,278.63);-webkit-text-stroke:0.18px #1a1a1a">Suporte</div>
<div class="t" style="font-size:12px;color:#1a1a1a;transform:matrix(0.41509,-0.03557,0.00899,0.59024,442.52,268.65);-webkit-text-stroke:0.18px #1a1a1a">Supita</div>
<div class="t" style="font-size:12px;color:#1a1a1a;transform:matrix(0.41139,-0.03525,0.00792,0.58769,458.03,267.34);-webkit-text-stroke:0.18px #1a1a1a">jevaris</div>
<div class="t" style="font-size:12px;color:#1a1a1a;transform:matrix(0.40740,-0.03491,0.00676,0.58493,473.68,266.03);-webkit-text-stroke:0.18px #1a1a1a">truaulijs</div>
<div class="t" style="font-size:12px;color:#1a1a1a;transform:matrix(0.40387,-0.03461,0.00575,0.58247,491.88,264.49);-webkit-text-stroke:0.18px #1a1a1a">SJJJ</div>
<div class="t" style="font-size:12px;color:#1a1a1a;transform:matrix(0.37400,-0.03205,-0.00266,0.56122,622.15,253.50);-webkit-text-stroke:0.18px #1a1a1a">SJJJ</div>
<div class="t" style="font-size:12px;color:#1a1a1a;transform:matrix(0.36029,-0.03087,-0.01016,0.54066,747.57,242.92);-webkit-text-stroke:0.18px #1a1a1a">2012</div>
<div class="t" style="font-size:12px;color:#1a1a1a;transform:matrix(0.35591,-0.03050,-0.01127,0.53746,761.16,241.78);-webkit-text-stroke:0.18px #1a1a1a">04/07/2012</div>
<div class="t" style="font-size:12px;color:#1a1a1a;transform:matrix(0.47673,-0.04216,0.02190,0.61801,262.94,293.92);-webkit-text-stroke:0.18px #1a1a1a">00356</div>
<div class="t" style="font-size:12px;color:#1a1a1a;transform:matrix(0.46863,-0.04144,0.01955,0.61293,288.13,291.73);-webkit-text-stroke:0.18px #1a1a1a">31/10/2012</div>
<div class="t" style="font-size:12px;color:#1a1a1a;transform:matrix(0.43988,-0.03890,0.01640,0.60600,324.65,288.56);-webkit-text-stroke:0.18px #1a1a1a">Desenvolvimento</div>
<div class="t" style="font-size:12px;color:#1a1a1a;transform:matrix(0.41227,-0.03646,0.00829,0.58735,442.75,278.27);-webkit-text-stroke:0.18px #1a1a1a">Jasanvilvenanti</div>
<div class="t" style="font-size:12px;color:#1a1a1a;transform:matrix(0.40647,-0.03595,0.00661,0.58335,477.88,275.19);-webkit-text-stroke:0.18px #1a1a1a">mõjuli</div>
<div class="t" style="font-size:12px;color:#1a1a1a;transform:matrix(0.40261,-0.03560,0.00550,0.58066,491.99,273.97);-webkit-text-stroke:0.18px #1a1a1a">jinsultus</div>
<div class="t" style="font-size:12px;color:#1a1a1a;transform:matrix(0.39861,-0.03525,0.00436,0.57788,510.79,272.33);-webkit-text-stroke:0.18px #1a1a1a">Putnar</div>
<div class="t" style="font-size:12px;color:#1a1a1a;transform:matrix(0.39468,-0.03490,0.00324,0.57512,526.22,270.99);-webkit-text-stroke:0.18px #1a1a1a">entamat</div>
<div class="t" style="font-size:12px;color:#1a1a1a;transform:matrix(0.37323,-0.03301,-0.00276,0.55979,622.12,262.63);-webkit-text-stroke:0.18px #1a1a1a">Putnar</div>
<div class="t" style="font-size:12px;color:#1a1a1a;transform:matrix(0.37099,-0.03281,-0.00337,0.55817,636.55,261.37);-webkit-text-stroke:0.18px #1a1a1a">IS</div>
<div class="t" style="font-size:12px;color:#1a1a1a;transform:matrix(0.35996,-0.03183,-0.01014,0.53959,747.41,251.72);-webkit-text-stroke:0.18px #1a1a1a">2012</div>
<div class="t" style="font-size:12px;color:#1a1a1a;transform:matrix(0.35558,-0.03145,-0.01125,0.53641,760.99,250.55);-webkit-text-stroke:0.18px #1a1a1a">15/06/2012</div>
<div class="t" style="font-size:12px;color:#1a1a1a;transform:matrix(0.47614,-0.04341,0.02185,0.61661,263.30,303.98);-webkit-text-stroke:0.18px #1a1a1a">00351</div>
<div class="t" style="font-size:12px;color:#1a1a1a;transform:matrix(0.46807,-0.04268,0.01951,0.61156,288.47,301.73);-webkit-text-stroke:0.18px #1a1a1a">31/12/2012</div>
<div class="t" style="font-size:12px;color:#1a1a1a;transform:matrix(0.44205,-0.04031,0.01717,0.60644,324.85,298.45);-webkit-text-stroke:0.18px #1a1a1a">Suporte</div>
<div class="t" style="font-size:12px;color:#1a1a1a;transform:matrix(0.41416,-0.03776,0.00895,0.58770,442.83,287.85);-webkit-text-stroke:0.18px #1a1a1a">Supita</div>
<div class="t" style="font-size:12px;color:#1a1a1a;transform:matrix(0.41139,-0.03751,0.00815,0.58580,458.29,286.46);-webkit-text-stroke:0.18px #1a1a1a">uni</div>
<div class="t" style="font-size:12px;color:#1a1a1a;transform:matrix(0.40899,-0.03729,0.00745,0.58415,466.26,285.74);-webkit-text-stroke:0.18px #1a1a1a">1001</div>
<div class="t" style="font-size:12px;color:#1a1a1a;transform:matrix(0.40618,-0.03703,0.00664,0.58221,478.55,284.64);-webkit-text-stroke:0.18px #1a1a1a">Jruw</div>
<div class="t" style="font-size:12px;color:#1a1a1a;transform:matrix(0.40292,-0.03674,0.00571,0.57995,490.20,283.60);-webkit-text-stroke:0.18px #1a1a1a">Pijutiru</div>
<div class="t" style="font-size:12px;color:#1a1a1a;transform:matrix(0.37327,-0.03403,-0.00264,0.55895,622.07,271.75);-webkit-text-stroke:0.18px #1a1a1a">Jruw</div>
<div class="t" style="font-size:12px;color:#1a1a1a;transform:matrix(0.35703,-0.03255,-0.00707,0.54706,696.78,265.03);-webkit-text-stroke:0.18px #1a1a1a">Jiili</div>
<div class="t" style="font-size:12px;color:#1a1a1a;transform:matrix(0.35598,-0.03246,-0.00735,0.54629,703.91,264.39);-webkit-text-stroke:0.18px #1a1a1a">/</div>
<div class="t" style="font-size:12px;color:#1a1a1a;transform:matrix(0.35396,-0.03227,-0.00790,0.54478,706.31,264.18);-webkit-text-stroke:0.18px #1a1a1a">Jalepon</div>
<div class="t" style="font-size:12px;color:#1a1a1a;transform:matrix(0.35962,-0.03279,-0.01012,0.53853,747.25,260.50);-webkit-text-stroke:0.18px #1a1a1a">2012</div>
<div class="t" style="font-size:12px;color:#1a1a1a;transform:matrix(0.35525,-0.03239,-0.01123,0.53536,760.82,259.29);-webkit-text-stroke:0.18px #1a1a1a">18/05/2012</div>
<div class="t" style="font-size:12px;color:#1a1a1a;transform:matrix(0.47556,-0.04466,0.02180,0.61521,263.67,314.02);-webkit-text-stroke:0.18px #1a1a1a">00348</div>
<div class="t" style="font-size:12px;color:#1a1a1a;transform:matrix(0.46750,-0.04390,0.01946,0.61018,288.80,311.70);-webkit-text-stroke:0.18px #1a1a1a">14/05/2012</div>
<div class="t" style="font-size:12px;color:#1a1a1a;transform:matrix(0.44153,-0.04147,0.01713,0.60510,325.14,308.33);-webkit-text-stroke:0.18px #1a1a1a">Suporte</div>
<div class="t" style="font-size:12px;color:#1a1a1a;transform:matrix(0.41369,-0.03885,0.00893,0.58643,442.98,297.42);-webkit-text-stroke:0.18px #1a1a1a">Supita</div>
<div class="t" style="font-size:12px;color:#1a1a1a;transform:matrix(0.41018,-0.03852,0.00791,0.58403,458.44,295.99);-webkit-text-stroke:0.18px #1a1a1a">téjneji</div>
<div class="t" style="font-size:12px;color:#1a1a1a;transform:matrix(0.40662,-0.03819,0.00689,0.58158,472.68,294.67);-webkit-text-stroke:0.18px #1a1a1a">váreus</div>
<div class="t" style="font-size:12px;color:#1a1a1a;transform:matrix(0.40308,-0.03785,0.00587,0.57914,488.68,293.19);-webkit-text-stroke:0.18px #1a1a1a">uzõas</div>
<div class="t" style="font-size:12px;color:#1a1a1a;transform:matrix(0.39952,-0.03752,0.00485,0.57667,502.94,291.87);-webkit-text-stroke:0.18px #1a1a1a">Atetuja</div>
<div class="t" style="font-size:12px;color:#1a1a1a;transform:matrix(0.37239,-0.03497,-0.00277,0.55744,622.04,280.84);-webkit-text-stroke:0.18px #1a1a1a">Atetuja</div>
<div class="t" style="font-size:12px;color:#1a1a1a;transform:matrix(0.35929,-0.03374,-0.01010,0.53747,747.09,269.27);-webkit-text-stroke:0.18px #1a1a1a">2012</div>
<div class="t" style="font-size:12px;color:#1a1a1a;transform:matrix(0.35493,-0.03333,-0.01121,0.53431,760.64,268.02);-webkit-text-stroke:0.18px #1a1a1a">25/04/2012</div>
<div class="t" style="font-size:12px;color:#1a1a1a;transform:matrix(0.47497,-0.04590,0.02175,0.61382,264.03,324.04);-webkit-text-stroke:0.18px #1a1a1a">00347</div>
<div class="t" style="font-size:12px;color:#1a1a1a;transform:matrix(0.46694,-0.04513,0.01942,0.60882,289.13,321.65);-webkit-text-stroke:0.18px #1a1a1a">31/12/2012</div>
<div class="t" style="font-size:12px;color:#1a1a1a;transform:matrix(0.44100,-0.04262,0.01710,0.60375,325.43,318.19);-webkit-text-stroke:0.18px #1a1a1a">Suporte</div>
<div class="t" style="font-size:12px;color:#1a1a1a;transform:matrix(0.41323,-0.03994,0.00891,0.58517,443.14,306.97);-webkit-text-stroke:0.18px #1a1a1a">Supita</div>
<div class="t" style="font-size:12px;color:#1a1a1a;transform:matrix(0.40906,-0.03953,0.00770,0.58232,458.59,305.50);-webkit-text-stroke:0.18px #1a1a1a">sestamu</div>
<div class="t" style="font-size:12px;color:#1a1a1a;transform:matrix(0.40437,-0.03908,0.00635,0.57910,478.51,303.60);-webkit-text-stroke:0.18px #1a1a1a">unuáreis</div>
<div class="t" style="font-size:12px;color:#1a1a1a;transform:matrix(0.40170,-0.03882,0.00558,0.57726,498.45,301.69);-webkit-text-stroke:0.18px #1a1a1a">-</div>
<div class="t" style="font-size:12px;color:#1a1a1a;transform:matrix(0.39924,-0.03858,0.00488,0.57555,501.42,301.42);-webkit-text-stroke:0.18px #1a1a1a">aujkupa</div>
<div class="t" style="font-size:12px;color:#1a1a1a;transform:matrix(0.39625,-0.03830,0.00403,0.57348,519.52,299.68);-webkit-text-stroke:0.18px #1a1a1a">uni</div>
<div class="t" style="font-size:12px;color:#1a1a1a;transform:matrix(0.39399,-0.03808,0.00339,0.57190,527.19,298.95);-webkit-text-stroke:0.18px #1a1a1a">1001</div>
<div class="t" style="font-size:12px;color:#1a1a1a;transform:matrix(0.37216,-0.03597,-0.00273,0.55641,622.00,289.92);-webkit-text-stroke:0.18px #1a1a1a">Ejetiru</div>
<div class="t" style="font-size:12px;color:#1a1a1a;transform:matrix(0.36900,-0.03566,-0.00360,0.55413,635.91,288.60);-webkit-text-stroke:0.18px #1a1a1a">Jusatu</div>
<div class="t" style="font-size:12px;color:#1a1a1a;transform:matrix(0.35553,-0.03436,-0.00726,0.54428,696.57,282.82);-webkit-text-stroke:0.18px #1a1a1a">Senina</div>
<div class="t" style="font-size:12px;color:#1a1a1a;transform:matrix(0.35895,-0.03469,-0.01008,0.53642,746.93,278.01);-webkit-text-stroke:0.18px #1a1a1a">2012</div>
<div class="t" style="font-size:12px;color:#1a1a1a;transform:matrix(0.35460,-0.03427,-0.01119,0.53327,760.47,276.73);-webkit-text-stroke:0.18px #1a1a1a">01/01/2012</div>
<div class="t" style="font-size:12px;color:#1a1a1a;transform:matrix(0.47439,-0.04714,0.02170,0.61244,264.40,334.03);-webkit-text-stroke:0.18px #1a1a1a">00346</div>
<div class="t" style="font-size:12px;color:#1a1a1a;transform:matrix(0.46637,-0.04634,0.01938,0.60746,289.47,331.58);-webkit-text-stroke:0.18px #1a1a1a">31/12/2012</div>
<div class="t" style="font-size:12px;color:#1a1a1a;transform:matrix(0.44048,-0.04377,0.01706,0.60241,325.72,328.02);-webkit-text-stroke:0.18px #1a1a1a">Suporte</div>
<div class="t" style="font-size:12px;color:#1a1a1a;transform:matrix(0.41277,-0.04102,0.00889,0.58391,443.29,316.50);-webkit-text-stroke:0.18px #1a1a1a">Supita</div>
<div class="t" style="font-size:12px;color:#1a1a1a;transform:matrix(0.40928,-0.04067,0.00788,0.58153,458.71,314.98);-webkit-text-stroke:0.18px #1a1a1a">téjneji</div>
<div class="t" style="font-size:12px;color:#1a1a1a;transform:matrix(0.40589,-0.04033,0.00690,0.57922,472.91,313.59);-webkit-text-stroke:0.18px #1a1a1a">Juluru</div>
<div class="t" style="font-size:12px;color:#1a1a1a;transform:matrix(0.40277,-0.04002,0.00600,0.57707,487.53,312.16);-webkit-text-stroke:0.18px #1a1a1a">1001</div>
<div class="t" style="font-size:12px;color:#1a1a1a;transform:matrix(0.37184,-0.03695,-0.00271,0.55531,621.96,298.98);-webkit-text-stroke:0.18px #1a1a1a">Juluru</div>
<div class="t" style="font-size:12px;color:#1a1a1a;transform:matrix(0.35504,-0.03528,-0.00729,0.54308,696.46,291.68);-webkit-text-stroke:0.18px #1a1a1a">Juseuni</div>
<div class="t" style="font-size:12px;color:#1a1a1a;transform:matrix(0.35230,-0.03501,-0.00802,0.54106,712.32,290.12);-webkit-text-stroke:0.18px #1a1a1a">Aluji</div>
<div class="t" style="font-size:12px;color:#1a1a1a;transform:matrix(0.35862,-0.03564,-0.01006,0.53536,746.77,286.74);-webkit-text-stroke:0.18px #1a1a1a">2012</div>
<div class="t" style="font-size:12px;color:#1a1a1a;transform:matrix(0.35428,-0.03520,-0.01117,0.53223,760.30,285.42);-webkit-text-stroke:0.18px #1a1a1a">20/03/2012</div>
<div class="t" style="font-size:12px;color:#1a1a1a;transform:matrix(0.47381,-0.04837,0.02166,0.61106,264.76,344.01);-webkit-text-stroke:0.18px #1a1a1a">00341</div>
<div class="t" style="font-size:12px;color:#1a1a1a;transform:matrix(0.46581,-0.04755,0.01933,0.60610,289.80,341.49);-webkit-text-stroke:0.18px #1a1a1a">31/12/2012</div>
<div class="t" style="font-size:12px;color:#1a1a1a;transform:matrix(0.43996,-0.04491,0.01702,0.60108,326.00,337.84);-webkit-text-stroke:0.18px #1a1a1a">Suporte</div>
<div class="t" style="font-size:12px;color:#1a1a1a;transform:matrix(0.41231,-0.04209,0.00887,0.58266,443.44,326.00);-webkit-text-stroke:0.18px #1a1a1a">Supita</div>
<div class="t" style="font-size:12px;color:#1a1a1a;transform:matrix(0.40860,-0.04171,0.00780,0.58014,458.85,324.45);-webkit-text-stroke:0.18px #1a1a1a">Ínsajru</div>
<div class="t" style="font-size:12px;color:#1a1a1a;transform:matrix(0.40462,-0.04131,0.00665,0.57742,474.94,322.83);-webkit-text-stroke:0.18px #1a1a1a">jevarsis</div>
<div class="t" style="font-size:12px;color:#1a1a1a;transform:matrix(0.39922,-0.04076,0.00510,0.57371,492.79,321.04);-webkit-text-stroke:0.18px #1a1a1a">utanjemantis</div>
<div class="t" style="font-size:12px;color:#1a1a1a;transform:matrix(0.39455,-0.04028,0.00377,0.57048,521.24,318.16);-webkit-text-stroke:0.18px #1a1a1a">1001</div>
<div class="t" style="font-size:12px;color:#1a1a1a;transform:matrix(0.37132,-0.03791,-0.00274,0.55408,621.93,308.02);-webkit-text-stroke:0.18px #1a1a1a">Ínsajru</div>
<div class="t" style="font-size:12px;color:#1a1a1a;transform:matrix(0.35496,-0.03624,-0.00720,0.54219,696.34,300.52);-webkit-text-stroke:0.18px #1a1a1a">Mõsjel</div>
<div class="t" style="font-size:12px;color:#1a1a1a;transform:matrix(0.35186,-0.03592,-0.00803,0.53992,709.84,299.16);-webkit-text-stroke:0.18px #1a1a1a">Alassei</div>
<div class="t" style="font-size:12px;color:#1a1a1a;transform:matrix(0.35828,-0.03658,-0.01004,0.53431,746.61,295.45);-webkit-text-stroke:0.18px #1a1a1a">2012</div>
<div class="t" style="font-size:12px;color:#1a1a1a;transform:matrix(0.35395,-0.03613,-0.01114,0.53119,760.13,294.10);-webkit-text-stroke:0.18px #1a1a1a">16/03/2012</div>
<div class="t" style="font-size:12px;color:#1a1a1a;transform:matrix(0.47323,-0.04960,0.02161,0.60968,265.12,353.96);-webkit-text-stroke:0.18px #1a1a1a">00328</div>
<div class="t" style="font-size:12px;color:#1a1a1a;transform:matrix(0.46530,-0.04876,0.01930,0.60478,290.13,351.38);-webkit-text-stroke:0.18px #1a1a1a">30/09/2011</div>
<div class="t" style="font-size:12px;color:#1a1a1a;transform:matrix(0.43944,-0.04605,0.01698,0.59975,326.29,347.63);-webkit-text-stroke:0.18px #1a1a1a">Suporte</div>
<div class="t" style="font-size:12px;color:#1a1a1a;transform:matrix(0.41185,-0.04316,0.00885,0.58141,443.59,335.49);-webkit-text-stroke:0.18px #1a1a1a">Supita</div>
<div class="t" style="font-size:12px;color:#1a1a1a;transform:matrix(0.40697,-0.04265,0.00744,0.57810,459.02,333.90);-webkit-text-stroke:0.18px #1a1a1a">utuulezuzãi</div>
<div class="t" style="font-size:12px;color:#1a1a1a;transform:matrix(0.40164,-0.04209,0.00591,0.57446,485.07,331.20);-webkit-text-stroke:0.18px #1a1a1a">sestamu</div>
<div class="t" style="font-size:12px;color:#1a1a1a;transform:matrix(0.39854,-0.04177,0.00502,0.57232,504.60,329.17);-webkit-text-stroke:0.18px #1a1a1a">P2</div>
<div class="t" style="font-size:12px;color:#1a1a1a;transform:matrix(0.39596,-0.04150,0.00428,0.57055,511.79,328.43);-webkit-text-stroke:0.18px #1a1a1a">UNISJ</div>
<div class="t" style="font-size:12px;color:#1a1a1a;transform:matrix(0.37101,-0.03888,-0.00272,0.55300,621.89,317.04);-webkit-text-stroke:0.18px #1a1a1a">UNISJ</div>
<div class="t" style="font-size:12px;color:#1a1a1a;transform:matrix(0.35420,-0.03712,-0.00730,0.54081,696.24,309.35);-webkit-text-stroke:0.18px #1a1a1a">Fesajelu</div>
<div class="t" style="font-size:12px;color:#1a1a1a;transform:matrix(0.35799,-0.03752,-0.01001,0.53329,746.45,304.15);-webkit-text-stroke:0.18px #1a1a1a">2011</div>
<div class="t" style="font-size:12px;color:#1a1a1a;transform:matrix(0.35366,-0.03706,-0.01111,0.53018,759.95,302.76);-webkit-text-stroke:0.18px #1a1a1a">23/09/2011</div>
<div class="t" style="font-size:12px;color:#1a1a1a;transform:matrix(0.47265,-0.05081,0.02156,0.60831,265.48,363.88);-webkit-text-stroke:0.18px #1a1a1a">00300</div>
<div class="t" style="font-size:12px;color:#1a1a1a;transform:matrix(0.46474,-0.04996,0.01926,0.60343,290.46,361.24);-webkit-text-stroke:0.18px #1a1a1a">31/01/2011</div>
<div class="t" style="font-size:12px;color:#1a1a1a;transform:matrix(0.43626,-0.04690,0.01615,0.59668,326.67,357.40);-webkit-text-stroke:0.18px #1a1a1a">Desenvolvimento</div>
<div class="t" style="font-size:12px;color:#1a1a1a;transform:matrix(0.40908,-0.04398,0.00816,0.57860,443.82,344.96);-webkit-text-stroke:0.18px #1a1a1a">Jasanvilvenanti</div>
<div class="t" style="font-size:12px;color:#1a1a1a;transform:matrix(0.40296,-0.04332,0.00640,0.57444,478.69,341.25);-webkit-text-stroke:0.18px #1a1a1a">unustur</div>
<div class="t" style="font-size:12px;color:#1a1a1a;transform:matrix(0.40046,-0.04305,0.00568,0.57273,496.14,339.38);-webkit-text-stroke:0.18px #1a1a1a">a</div>
<div class="t" style="font-size:12px;color:#1a1a1a;transform:matrix(0.39866,-0.04286,0.00517,0.57150,500.16,338.96);-webkit-text-stroke:0.18px #1a1a1a">siltur</div>
<div class="t" style="font-size:12px;color:#1a1a1a;transform:matrix(0.39575,-0.04255,0.00433,0.56950,511.60,337.75);-webkit-text-stroke:0.18px #1a1a1a">mõjuli</div>
<div class="t" style="font-size:12px;color:#1a1a1a;transform:matrix(0.39238,-0.04219,0.00338,0.56717,525.33,336.29);-webkit-text-stroke:0.18px #1a1a1a">turajus</div>
<div class="t" style="font-size:12px;color:#1a1a1a;transform:matrix(0.38850,-0.04177,0.00228,0.56447,540.78,334.65);-webkit-text-stroke:0.18px #1a1a1a">entrunat</div>
<div class="t" style="font-size:12px;color:#1a1a1a;transform:matrix(0.37061,-0.03984,-0.00272,0.55185,621.85,326.04);-webkit-text-stroke:0.18px #1a1a1a">Putnar</div>
<div class="t" style="font-size:12px;color:#1a1a1a;transform:matrix(0.36840,-0.03961,-0.00333,0.55028,636.18,324.52);-webkit-text-stroke:0.18px #1a1a1a">IS</div>
<div class="t" style="font-size:12px;color:#1a1a1a;transform:matrix(0.35448,-0.03811,-0.00712,0.54019,696.11,318.16);-webkit-text-stroke:0.18px #1a1a1a">Mujta</div>
<div class="t" style="font-size:12px;color:#1a1a1a;transform:matrix(0.35196,-0.03784,-0.00780,0.53834,707.70,316.93);-webkit-text-stroke:0.18px #1a1a1a">Ajloja</div>
<div class="t" style="font-size:12px;color:#1a1a1a;transform:matrix(0.35762,-0.03845,-0.01000,0.53222,746.29,312.83);-webkit-text-stroke:0.18px #1a1a1a">2010</div>
<div class="t" style="font-size:12px;color:#1a1a1a;transform:matrix(0.35330,-0.03798,-0.01110,0.52913,759.78,311.40);-webkit-text-stroke:0.18px #1a1a1a">27/12/2010</div>
<div class="t" style="font-size:12px;color:#1a1a1a;transform:matrix(0.47208,-0.05203,0.02151,0.60695,265.84,373.79);-webkit-text-stroke:0.18px #1a1a1a">00299</div>
<div class="t" style="font-size:12px;color:#1a1a1a;transform:matrix(0.46419,-0.05116,0.01922,0.60208,290.79,371.08);-webkit-text-stroke:0.18px #1a1a1a">31/12/2011</div>
<div class="t" style="font-size:12px;color:#1a1a1a;transform:matrix(0.43815,-0.04829,0.01683,0.59694,326.87,367.15);-webkit-text-stroke:0.18px #1a1a1a">Diversos</div>
<div class="t" style="font-size:12px;color:#1a1a1a;transform:matrix(0.41026,-0.04522,0.00862,0.57847,443.91,354.40);-webkit-text-stroke:0.18px #1a1a1a">Jevarsus</div>
<div class="t" style="font-size:12px;color:#1a1a1a;transform:matrix(0.40611,-0.04476,0.00742,0.57567,464.97,352.11);-webkit-text-stroke:0.18px #1a1a1a">uzõas</div>
<div class="t" style="font-size:12px;color:#1a1a1a;transform:matrix(0.40384,-0.04451,0.00676,0.57412,479.32,350.54);-webkit-text-stroke:0.18px #1a1a1a">ja</div>
<div class="t" style="font-size:12px;color:#1a1a1a;transform:matrix(0.40071,-0.04416,0.00586,0.57199,484.47,349.99);-webkit-text-stroke:0.18px #1a1a1a">prispajzãi</div>
<div class="t" style="font-size:12px;color:#1a1a1a;transform:matrix(0.39774,-0.04384,0.00501,0.56996,506.09,347.62);-webkit-text-stroke:0.18px #1a1a1a">a</div>
<div class="t" style="font-size:12px;color:#1a1a1a;transform:matrix(0.39566,-0.04361,0.00442,0.56853,510.08,347.19);-webkit-text-stroke:0.18px #1a1a1a">varjus</div>
<div class="t" style="font-size:12px;color:#1a1a1a;transform:matrix(0.37024,-0.04080,-0.00271,0.55073,621.81,335.03);-webkit-text-stroke:0.18px #1a1a1a">Putnar</div>
<div class="t" style="font-size:12px;color:#1a1a1a;transform:matrix(0.36804,-0.04056,-0.00332,0.54916,636.13,333.46);-webkit-text-stroke:0.18px #1a1a1a">IS</div>
<div class="t" style="font-size:12px;color:#1a1a1a;transform:matrix(0.35729,-0.03938,-0.00998,0.53118,746.14,321.49);-webkit-text-stroke:0.18px #1a1a1a">2010</div>
<div class="t" style="font-size:12px;color:#1a1a1a;transform:matrix(0.35298,-0.03890,-0.01108,0.52810,759.61,320.03);-webkit-text-stroke:0.18px #1a1a1a">01/12/2010</div>
<div class="t" style="font-size:12px;color:#1a1a1a;transform:matrix(0.47150,-0.05324,0.02146,0.60558,266.20,383.67);-webkit-text-stroke:0.18px #1a1a1a">00289</div>
<div class="t" style="font-size:12px;color:#1a1a1a;transform:matrix(0.46358,-0.05234,0.01916,0.60071,291.12,380.90);-webkit-text-stroke:0.18px #1a1a1a">31/12/2010</div>
<div class="t" style="font-size:12px;color:#1a1a1a;transform:matrix(0.43523,-0.04914,0.01608,0.59406,327.25,376.88);-webkit-text-stroke:0.18px #1a1a1a">Desenvolvimento</div>
<div class="t" style="font-size:12px;color:#1a1a1a;transform:matrix(0.40984,-0.04627,0.00861,0.57726,444.06,363.83);-webkit-text-stroke:0.18px #1a1a1a">Sestamu</div>
<div class="t" style="font-size:12px;color:#1a1a1a;transform:matrix(0.40557,-0.04579,0.00737,0.57438,464.83,361.51);-webkit-text-stroke:0.18px #1a1a1a">Putnar</div>
<div class="t" style="font-size:12px;color:#1a1a1a;transform:matrix(0.40299,-0.04550,0.00663,0.57263,480.51,359.75);-webkit-text-stroke:0.18px #1a1a1a">v2</div>
<div class="t" style="font-size:12px;color:#1a1a1a;transform:matrix(0.40189,-0.04538,0.00632,0.57189,486.96,359.03);-webkit-text-stroke:0.18px #1a1a1a">-</div>
<div class="t" style="font-size:12px;color:#1a1a1a;transform:matrix(0.39756,-0.04489,0.00507,0.56893,489.99,358.71);-webkit-text-stroke:0.18px #1a1a1a">upremirumantis</div>
<div class="t" style="font-size:12px;color:#1a1a1a;transform:matrix(0.39318,-0.04439,0.00382,0.56593,524.12,354.89);-webkit-text-stroke:0.18px #1a1a1a">II</div>
<div class="t" style="font-size:12px;color:#1a1a1a;transform:matrix(0.36986,-0.04176,-0.00271,0.54961,621.78,343.99);-webkit-text-stroke:0.18px #1a1a1a">Putnar</div>
<div class="t" style="font-size:12px;color:#1a1a1a;transform:matrix(0.36767,-0.04151,-0.00331,0.54805,636.08,342.39);-webkit-text-stroke:0.18px #1a1a1a">IS</div>
<div class="t" style="font-size:12px;color:#1a1a1a;transform:matrix(0.35380,-0.03995,-0.00709,0.53805,695.89,335.72);-webkit-text-stroke:0.18px #1a1a1a">Mujta</div>
<div class="t" style="font-size:12px;color:#1a1a1a;transform:matrix(0.35129,-0.03966,-0.00777,0.53622,707.46,334.43);-webkit-text-stroke:0.18px #1a1a1a">Ajloja</div>
<div class="t" style="font-size:12px;color:#1a1a1a;transform:matrix(0.35696,-0.04030,-0.00997,0.53015,745.98,330.13);-webkit-text-stroke:0.18px #1a1a1a">2010</div>
<div class="t" style="font-size:12px;color:#1a1a1a;transform:matrix(0.35266,-0.03982,-0.01106,0.52707,759.44,328.64);-webkit-text-stroke:0.18px #1a1a1a">16/08/2010</div>
<div class="t" style="font-size:12px;color:#1a1a1a;transform:matrix(0.47093,-0.05444,0.02141,0.60423,266.56,393.53);-webkit-text-stroke:0.18px #1a1a1a">00283</div>
<div class="t" style="font-size:12px;color:#1a1a1a;transform:matrix(0.46307,-0.05353,0.01913,0.59941,291.44,390.70);-webkit-text-stroke:0.18px #1a1a1a">31/12/2011</div>
<div class="t" style="font-size:12px;color:#1a1a1a;transform:matrix(0.43736,-0.05056,0.01683,0.59447,327.43,386.58);-webkit-text-stroke:0.18px #1a1a1a">Suporte</div>
<div class="t" style="font-size:12px;color:#1a1a1a;transform:matrix(0.41003,-0.04740,0.00878,0.57646,444.20,373.23);-webkit-text-stroke:0.18px #1a1a1a">Supita</div>
<div class="t" style="font-size:12px;color:#1a1a1a;transform:matrix(0.40613,-0.04695,0.00765,0.57384,459.53,371.48);-webkit-text-stroke:0.18px #1a1a1a">jevarsis</div>
<div class="t" style="font-size:12px;color:#1a1a1a;transform:matrix(0.40071,-0.04632,0.00609,0.57017,477.44,369.44);-webkit-text-stroke:0.18px #1a1a1a">utanjemantis</div>
<div class="t" style="font-size:12px;color:#1a1a1a;transform:matrix(0.39518,-0.04568,0.00451,0.56640,506.02,366.17);-webkit-text-stroke:0.18px #1a1a1a">sestamu</div>
<div class="t" style="font-size:12px;color:#1a1a1a;transform:matrix(0.39123,-0.04523,0.00338,0.56369,525.25,363.97);-webkit-text-stroke:0.18px #1a1a1a">Putnar</div>
<div class="t" style="font-size:12px;color:#1a1a1a;transform:matrix(0.38905,-0.04497,0.00276,0.56219,540.37,362.23);-webkit-text-stroke:0.18px #1a1a1a">2</div>
<div class="t" style="font-size:12px;color:#1a1a1a;transform:matrix(0.38772,-0.04482,0.00239,0.56127,544.27,361.79);-webkit-text-stroke:0.18px #1a1a1a">Mir</div>
<div class="t" style="font-size:12px;color:#1a1a1a;transform:matrix(0.37027,-0.04280,-0.00249,0.54905,621.73,352.94);-webkit-text-stroke:0.18px #1a1a1a">Mir</div>
<div class="t" style="font-size:12px;color:#1a1a1a;transform:matrix(0.35311,-0.04082,-0.00717,0.53672,695.79,344.48);-webkit-text-stroke:0.18px #1a1a1a">Lujeuni</div>
<div class="t" style="font-size:12px;color:#1a1a1a;transform:matrix(0.35124,-0.04060,-0.00768,0.53536,710.62,342.78);-webkit-text-stroke:0.18px #1a1a1a">/</div>
<div class="t" style="font-size:12px;color:#1a1a1a;transform:matrix(0.34977,-0.04043,-0.00807,0.53429,712.97,342.52);-webkit-text-stroke:0.18px #1a1a1a">Tjeuji</div>
<div class="t" style="font-size:12px;color:#1a1a1a;transform:matrix(0.35663,-0.04123,-0.00995,0.52911,745.82,338.76);-webkit-text-stroke:0.18px #1a1a1a">2010</div>
<div class="t" style="font-size:12px;color:#1a1a1a;transform:matrix(0.35233,-0.04073,-0.01104,0.52605,759.27,337.23);-webkit-text-stroke:0.18px #1a1a1a">29/07/2010</div>
<div class="t" style="font-size:10.5px;color:#111;transform:matrix(0.51843,-0.06253,0.02126,0.60156,266.13,412.01);-webkit-text-stroke:0.15px #111">Serviço:</div>
<div class="t" style="font-size:11.5px;color:#111;transform:matrix(0.49832,-0.05994,0.01598,0.59049,338.28,402.21);-webkit-text-stroke:0.15px #111">Cliente:</div>
<div class="t" style="font-size:9.5px;color:#111;transform:matrix(0.47918,-0.05732,0.01103,0.57982,406.53,391.76);-webkit-text-stroke:0.1px #111">Andamento</div>
<div class="t" style="font-size:9.5px;color:#111;transform:matrix(0.47872,-0.05837,0.01101,0.57875,406.70,399.91);-webkit-text-stroke:0.1px #111">Encerrados</div>
<div class="t" style="font-size:9.5px;color:#111;transform:matrix(0.47977,-0.05960,0.01138,0.57855,406.83,408.03);-webkit-text-stroke:0.1px #111">Todos</div>
<div class="t" style="font-size:9.5px;color:#111;transform:matrix(0.47031,-0.05634,0.00878,0.57463,443.05,388.02);-webkit-text-stroke:0.1px #111">Entrada</div>
<div class="t" style="font-size:9.5px;color:#111;transform:matrix(0.47039,-0.05743,0.00890,0.57389,443.17,396.08);-webkit-text-stroke:0.1px #111">Prazo</div>
<div class="t" style="font-size:9.5px;color:#aaa;transform:matrix(0.46775,-0.05819,0.00833,0.57156,443.35,404.13);-webkit-text-stroke:0.1px #aaa">Encerramento</div>
<div class="t" style="font-size:12px;color:#aaa;transform:matrix(0.43155,-0.05191,0.00585,0.56756,481.60,385.17);-webkit-text-stroke:0.1px #aaa">27/03/2013</div>
<div class="t" style="font-size:12px;color:#aaa;transform:matrix(0.43095,-0.05332,0.00583,0.56602,481.74,397.13);-webkit-text-stroke:0.1px #aaa">31/03/2013</div>
<div class="t" style="font-size:9px;color:#555;transform:matrix(0.46335,-0.05665,0.00714,0.56972,474.00,392.92);-webkit-text-stroke:0.1px #555">a</div>
<div class="t" style="font-size:9.5px;color:#111;transform:matrix(0.44882,-0.05376,0.00341,0.56197,527.69,377.98);-webkit-text-stroke:0.1px #111">Não</div>
<div class="t" style="font-size:9.5px;color:#111;transform:matrix(0.44686,-0.05353,0.00293,0.56079,536.69,376.91);-webkit-text-stroke:0.1px #111">fat</div>
<div class="t" style="font-size:9.5px;color:#111;transform:matrix(0.44692,-0.05456,0.00304,0.56007,527.77,385.87);-webkit-text-stroke:0.1px #111">Faturados</div>
<div class="t" style="font-size:9.5px;color:#111;transform:matrix(0.44753,-0.05567,0.00328,0.55968,527.80,393.73);-webkit-text-stroke:0.1px #111">Todos</div>
<div class="t" style="font-size:10.5px;color:#111;transform:matrix(0.44029,-0.05292,0.00133,0.55671,556.59,375.96);-webkit-text-stroke:0.15px #111">Forma:</div>
<div class="t" style="font-size:10.5px;color:#111;transform:matrix(0.43929,-0.05425,0.00122,0.55504,556.63,387.12);-webkit-text-stroke:0.15px #111">Emissor:</div>
<div class="t" style="font-size:10.5px;color:#111;transform:matrix(0.42793,-0.05144,-0.00167,0.54921,601.29,370.65);-webkit-text-stroke:0.15px #111">Categoria:</div>
<div class="t" style="font-size:12px;color:#111;transform:matrix(0.50612,-0.06549,0.02329,0.60166,243.29,447.26);-webkit-text-stroke:0.15px #111">Em</div>
<div class="t" style="font-size:12px;color:#111;transform:matrix(0.50007,-0.06471,0.02163,0.59825,254.16,445.88);-webkit-text-stroke:0.15px #111">andamento,</div>
<div class="t" style="font-size:12px;color:#111;transform:matrix(0.49199,-0.06366,0.01942,0.59366,287.50,441.61);-webkit-text-stroke:0.15px #111">faturados</div>
<div class="t" style="font-size:12px;color:#111;transform:matrix(0.48780,-0.06312,0.01829,0.59126,313.72,438.24);-webkit-text-stroke:0.15px #111">e</div>
<div class="t" style="font-size:12px;color:#111;transform:matrix(0.48562,-0.06284,0.01770,0.59001,318.61,437.62);-webkit-text-stroke:0.15px #111">não</div>
<div class="t" style="font-size:12px;color:#111;transform:matrix(0.48044,-0.06217,0.01630,0.58703,330.00,436.17);-webkit-text-stroke:0.15px #111">faturados.</div>
<div class="t" style="font-size:12px;color:#111;transform:matrix(0.47309,-0.06122,0.01432,0.58275,361.97,432.07);-webkit-text-stroke:0.15px #111">Carga:</div>
<div class="t" style="font-size:12px;color:#111;transform:matrix(0.47001,-0.06082,0.01350,0.58096,380.57,429.68);-webkit-text-stroke:0.15px #111">0</div>
<div class="t" style="font-size:12px;color:#111;transform:matrix(0.46881,-0.06066,0.01318,0.58025,385.27,429.07);-webkit-text-stroke:0.15px #111">s</div>
</div></body></html>
